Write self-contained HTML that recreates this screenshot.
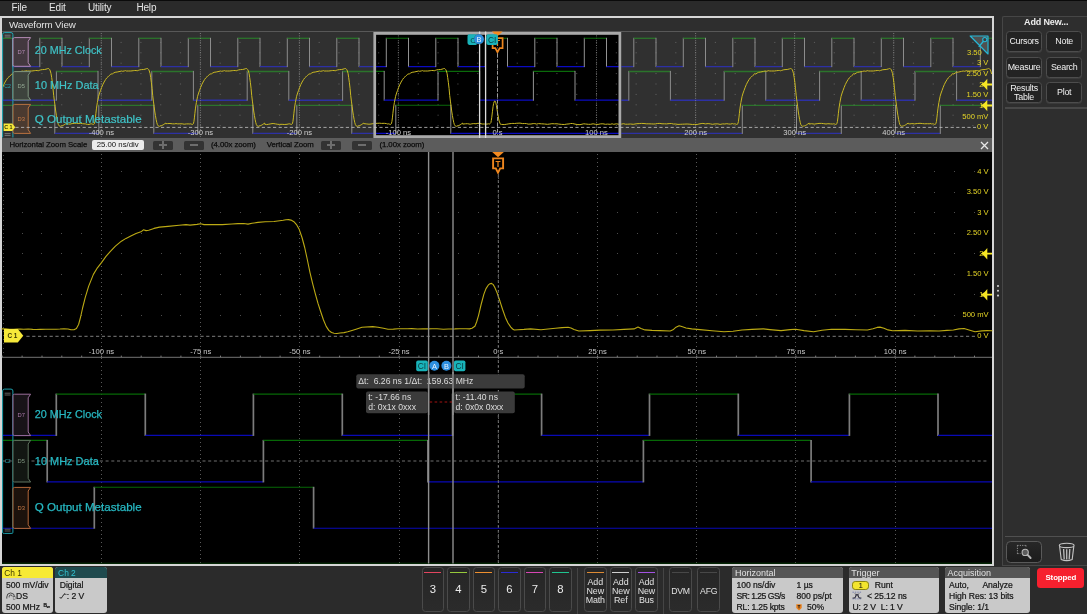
<!DOCTYPE html>
<html lang="en"><head><meta charset="utf-8"><title>Waveform View</title>
<style>
html,body{margin:0;padding:0;background:#2b2b2b;}
body{width:1087px;height:614px;position:relative;overflow:hidden;font-family:"Liberation Sans", "DejaVu Sans", sans-serif;color:#e6e6e6;}
.abs{position:absolute;}
.ly{position:absolute;left:0;top:0;width:1087px;height:614px;will-change:transform;}
svg text{font-family:"Liberation Sans", "DejaVu Sans", sans-serif;}

.menu{left:0;top:1px;width:1087px;height:15px;background:#2a2a2a;}
.menu span{position:absolute;top:1.2px;font-size:10px;color:#e4e4e4;letter-spacing:-0.15px;}
.topline{left:0;top:0;width:1087px;height:1px;background:#0a0a0a;}
.frame{left:0;top:16px;width:994.2px;height:549.6px;border:2px solid #d6d6d6;border-top-width:2px;box-sizing:border-box;background:#000;}
.title{left:2px;top:18px;width:990px;height:13.2px;background:#2e2e2e;border-bottom:1px solid #585858;}
.title span{position:absolute;left:7px;top:1.2px;font-size:9.8px;color:#e4e4e4;letter-spacing:-0.1px;}
.side{left:1002.2px;top:16px;width:86px;height:550px;background:#2e2e2e;border:1px solid #464646;border-right:none;box-sizing:border-box;border-radius:2px 0 0 0;}
.side .hd{position:absolute;left:0;top:-0.2px;width:86px;text-align:center;font-size:9px;font-weight:bold;color:#ededed;letter-spacing:-0.15px;}
.sbtn{position:absolute;width:36px;height:20.7px;box-sizing:border-box;border:1px solid #4d4d4d;border-radius:3.5px;background:#232323;color:#f0f0f0;font-size:8.9px;letter-spacing:-0.25px;text-align:center;line-height:18.6px;box-shadow:0 1px 0 #3a3a3a;white-space:nowrap;}
.sbtn.two{line-height:9px;padding-top:0.6px;}
.sep{position:absolute;left:2px;width:84px;height:1.5px;background:#484848;}
.tbar{left:2px;top:138px;width:990px;height:14px;background:#5c5c5c;}
.tbar span{position:absolute;top:2.2px;font-size:7.8px;color:#0c0c0c;white-space:nowrap;letter-spacing:-0.05px;-webkit-text-stroke:0.25px #0c0c0c;}
.tbar .inp{position:absolute;left:89.8px;top:2.2px;width:51.8px;height:9.6px;background:#ececec;border-radius:2px;color:#111;font-size:7.8px;text-align:center;line-height:9.8px;}
.tbar .zb{position:absolute;top:2.6px;width:20.4px;height:9px;background:#333;border-radius:1.5px;}
.tbar .zb:before{content:"";position:absolute;left:6.4px;top:3.7px;width:7.6px;height:1.6px;background:#6e6e6e;}
.tbar .zb.p:after{content:"";position:absolute;left:9.4px;top:0.9px;width:1.6px;height:7.2px;background:#6e6e6e;}


.bb{position:absolute;top:567.3px;height:45.4px;background:#c9c9c9;border-radius:3px;overflow:hidden;color:#161616;font-size:8.6px;letter-spacing:-0.05px;}
.bb .h{position:absolute;left:0;top:0;right:0;height:10.6px;font-size:9.0px;line-height:12px;padding-left:2.7px;letter-spacing:0px;}
.bb span{position:absolute;white-space:nowrap;line-height:10px;-webkit-text-stroke:0.22px #161616;}
.nb{position:absolute;top:567px;width:22.6px;height:45.4px;box-sizing:border-box;border:1px solid #4a4a4a;border-radius:3.5px;background:linear-gradient(#262626,#2b2b2b);color:#ececec;text-align:center;}
.nb i{position:absolute;left:1.8px;right:1.8px;top:4.0px;height:1.3px;display:block;}
.nb b{position:absolute;left:0;right:0;top:15.2px;font-weight:normal;font-size:11.3px;line-height:12px;}
.nb em{position:absolute;left:-3px;right:-3px;top:9.6px;font-style:normal;font-size:8.9px;line-height:9.0px;color:#e2e2e2;letter-spacing:-0.1px;}
.nb u{position:absolute;left:-3px;right:-3px;top:17.8px;text-decoration:none;font-size:8.7px;line-height:10px;color:#e2e2e2;letter-spacing:-0.2px;}
.vsep{position:absolute;top:568px;width:1px;height:46px;background:#454545;}
.stop{left:1037.4px;top:567.8px;width:47px;height:20.4px;background:#f6202e;border-radius:3.5px;color:#fff;font-weight:bold;font-size:7.9px;line-height:19.6px;text-align:center;letter-spacing:-0.1px;}

</style></head><body>
<div class="ly"><div class="abs topline"></div>
<div class="abs menu"><span style="left:11.5px">File</span><span style="left:49px">Edit</span><span style="left:88px">Utility</span><span style="left:136.4px">Help</span></div>
<div class="abs frame"></div>
<div class="abs title"><span>Waveform View</span></div>
<div class="abs side"><div class="hd">Add New...</div><div class="sbtn" style="left:2.9px;top:14.2px">Cursors</div><div class="sbtn" style="left:43.0px;top:14.2px">Note</div><div class="sbtn" style="left:2.9px;top:39.9px">Measure</div><div class="sbtn" style="left:43.0px;top:39.9px">Search</div><div class="sbtn two" style="left:2.9px;top:65.2px">Results<br>Table</div><div class="sbtn" style="left:43.0px;top:65.2px">Plot</div><div class="sep" style="top:90.4px"></div><div class="sep" style="top:518.8px;height:1px;background:#505050"></div></div></div>
<svg class="abs" style="left:0;top:0" width="1087" height="614" viewBox="0 0 1087 614">
<rect x="2.0" y="32.0" width="990.0" height="106.0" fill="#303030" />
<defs><clipPath id="zb"><rect x="373.3" y="32" width="247.99999999999994" height="106"/></clipPath></defs>
<line x1="2.0" y1="38.3" x2="12.5" y2="38.3" stroke="#2b742b" stroke-width="1.3" />
<line x1="12.5" y1="37.8" x2="12.5" y2="67.1" stroke="#8c8c8c" stroke-width="1.0" />
<line x1="12.5" y1="66.6" x2="39.8" y2="66.6" stroke="#2d30a4" stroke-width="1.3" />
<line x1="39.8" y1="37.8" x2="39.8" y2="67.1" stroke="#8c8c8c" stroke-width="1.0" />
<line x1="39.8" y1="38.3" x2="62.0" y2="38.3" stroke="#2b742b" stroke-width="1.3" />
<line x1="62.0" y1="37.8" x2="62.0" y2="67.1" stroke="#8c8c8c" stroke-width="1.0" />
<line x1="62.0" y1="66.6" x2="89.3" y2="66.6" stroke="#2d30a4" stroke-width="1.3" />
<line x1="89.3" y1="37.8" x2="89.3" y2="67.1" stroke="#8c8c8c" stroke-width="1.0" />
<line x1="89.3" y1="38.3" x2="111.5" y2="38.3" stroke="#2b742b" stroke-width="1.3" />
<line x1="111.5" y1="37.8" x2="111.5" y2="67.1" stroke="#8c8c8c" stroke-width="1.0" />
<line x1="111.5" y1="66.6" x2="138.8" y2="66.6" stroke="#2d30a4" stroke-width="1.3" />
<line x1="138.8" y1="37.8" x2="138.8" y2="67.1" stroke="#8c8c8c" stroke-width="1.0" />
<line x1="138.8" y1="38.3" x2="161.0" y2="38.3" stroke="#2b742b" stroke-width="1.3" />
<line x1="161.0" y1="37.8" x2="161.0" y2="67.1" stroke="#8c8c8c" stroke-width="1.0" />
<line x1="161.0" y1="66.6" x2="188.3" y2="66.6" stroke="#2d30a4" stroke-width="1.3" />
<line x1="188.3" y1="37.8" x2="188.3" y2="67.1" stroke="#8c8c8c" stroke-width="1.0" />
<line x1="188.3" y1="38.3" x2="210.5" y2="38.3" stroke="#2b742b" stroke-width="1.3" />
<line x1="210.5" y1="37.8" x2="210.5" y2="67.1" stroke="#8c8c8c" stroke-width="1.0" />
<line x1="210.5" y1="66.6" x2="237.8" y2="66.6" stroke="#2d30a4" stroke-width="1.3" />
<line x1="237.8" y1="37.8" x2="237.8" y2="67.1" stroke="#8c8c8c" stroke-width="1.0" />
<line x1="237.8" y1="38.3" x2="260.0" y2="38.3" stroke="#2b742b" stroke-width="1.3" />
<line x1="260.0" y1="37.8" x2="260.0" y2="67.1" stroke="#8c8c8c" stroke-width="1.0" />
<line x1="260.0" y1="66.6" x2="287.3" y2="66.6" stroke="#2d30a4" stroke-width="1.3" />
<line x1="287.3" y1="37.8" x2="287.3" y2="67.1" stroke="#8c8c8c" stroke-width="1.0" />
<line x1="287.3" y1="38.3" x2="309.5" y2="38.3" stroke="#2b742b" stroke-width="1.3" />
<line x1="309.5" y1="37.8" x2="309.5" y2="67.1" stroke="#8c8c8c" stroke-width="1.0" />
<line x1="309.5" y1="66.6" x2="336.8" y2="66.6" stroke="#2d30a4" stroke-width="1.3" />
<line x1="336.8" y1="37.8" x2="336.8" y2="67.1" stroke="#8c8c8c" stroke-width="1.0" />
<line x1="336.8" y1="38.3" x2="359.0" y2="38.3" stroke="#2b742b" stroke-width="1.3" />
<line x1="359.0" y1="37.8" x2="359.0" y2="67.1" stroke="#8c8c8c" stroke-width="1.0" />
<line x1="359.0" y1="66.6" x2="386.3" y2="66.6" stroke="#2d30a4" stroke-width="1.3" />
<line x1="386.3" y1="37.8" x2="386.3" y2="67.1" stroke="#8c8c8c" stroke-width="1.0" />
<line x1="386.3" y1="38.3" x2="408.5" y2="38.3" stroke="#2b742b" stroke-width="1.3" />
<line x1="408.5" y1="37.8" x2="408.5" y2="67.1" stroke="#8c8c8c" stroke-width="1.0" />
<line x1="408.5" y1="66.6" x2="435.8" y2="66.6" stroke="#2d30a4" stroke-width="1.3" />
<line x1="435.8" y1="37.8" x2="435.8" y2="67.1" stroke="#8c8c8c" stroke-width="1.0" />
<line x1="435.8" y1="38.3" x2="458.0" y2="38.3" stroke="#2b742b" stroke-width="1.3" />
<line x1="458.0" y1="37.8" x2="458.0" y2="67.1" stroke="#8c8c8c" stroke-width="1.0" />
<line x1="458.0" y1="66.6" x2="485.3" y2="66.6" stroke="#2d30a4" stroke-width="1.3" />
<line x1="485.3" y1="37.8" x2="485.3" y2="67.1" stroke="#8c8c8c" stroke-width="1.0" />
<line x1="485.3" y1="38.3" x2="507.5" y2="38.3" stroke="#2b742b" stroke-width="1.3" />
<line x1="507.5" y1="37.8" x2="507.5" y2="67.1" stroke="#8c8c8c" stroke-width="1.0" />
<line x1="507.5" y1="66.6" x2="534.8" y2="66.6" stroke="#2d30a4" stroke-width="1.3" />
<line x1="534.8" y1="37.8" x2="534.8" y2="67.1" stroke="#8c8c8c" stroke-width="1.0" />
<line x1="534.8" y1="38.3" x2="557.0" y2="38.3" stroke="#2b742b" stroke-width="1.3" />
<line x1="557.0" y1="37.8" x2="557.0" y2="67.1" stroke="#8c8c8c" stroke-width="1.0" />
<line x1="557.0" y1="66.6" x2="584.3" y2="66.6" stroke="#2d30a4" stroke-width="1.3" />
<line x1="584.3" y1="37.8" x2="584.3" y2="67.1" stroke="#8c8c8c" stroke-width="1.0" />
<line x1="584.3" y1="38.3" x2="606.5" y2="38.3" stroke="#2b742b" stroke-width="1.3" />
<line x1="606.5" y1="37.8" x2="606.5" y2="67.1" stroke="#8c8c8c" stroke-width="1.0" />
<line x1="606.5" y1="66.6" x2="633.8" y2="66.6" stroke="#2d30a4" stroke-width="1.3" />
<line x1="633.8" y1="37.8" x2="633.8" y2="67.1" stroke="#8c8c8c" stroke-width="1.0" />
<line x1="633.8" y1="38.3" x2="656.0" y2="38.3" stroke="#2b742b" stroke-width="1.3" />
<line x1="656.0" y1="37.8" x2="656.0" y2="67.1" stroke="#8c8c8c" stroke-width="1.0" />
<line x1="656.0" y1="66.6" x2="683.3" y2="66.6" stroke="#2d30a4" stroke-width="1.3" />
<line x1="683.3" y1="37.8" x2="683.3" y2="67.1" stroke="#8c8c8c" stroke-width="1.0" />
<line x1="683.3" y1="38.3" x2="705.5" y2="38.3" stroke="#2b742b" stroke-width="1.3" />
<line x1="705.5" y1="37.8" x2="705.5" y2="67.1" stroke="#8c8c8c" stroke-width="1.0" />
<line x1="705.5" y1="66.6" x2="732.8" y2="66.6" stroke="#2d30a4" stroke-width="1.3" />
<line x1="732.8" y1="37.8" x2="732.8" y2="67.1" stroke="#8c8c8c" stroke-width="1.0" />
<line x1="732.8" y1="38.3" x2="755.0" y2="38.3" stroke="#2b742b" stroke-width="1.3" />
<line x1="755.0" y1="37.8" x2="755.0" y2="67.1" stroke="#8c8c8c" stroke-width="1.0" />
<line x1="755.0" y1="66.6" x2="782.3" y2="66.6" stroke="#2d30a4" stroke-width="1.3" />
<line x1="782.3" y1="37.8" x2="782.3" y2="67.1" stroke="#8c8c8c" stroke-width="1.0" />
<line x1="782.3" y1="38.3" x2="804.5" y2="38.3" stroke="#2b742b" stroke-width="1.3" />
<line x1="804.5" y1="37.8" x2="804.5" y2="67.1" stroke="#8c8c8c" stroke-width="1.0" />
<line x1="804.5" y1="66.6" x2="831.8" y2="66.6" stroke="#2d30a4" stroke-width="1.3" />
<line x1="831.8" y1="37.8" x2="831.8" y2="67.1" stroke="#8c8c8c" stroke-width="1.0" />
<line x1="831.8" y1="38.3" x2="854.0" y2="38.3" stroke="#2b742b" stroke-width="1.3" />
<line x1="854.0" y1="37.8" x2="854.0" y2="67.1" stroke="#8c8c8c" stroke-width="1.0" />
<line x1="854.0" y1="66.6" x2="881.3" y2="66.6" stroke="#2d30a4" stroke-width="1.3" />
<line x1="881.3" y1="37.8" x2="881.3" y2="67.1" stroke="#8c8c8c" stroke-width="1.0" />
<line x1="881.3" y1="38.3" x2="903.5" y2="38.3" stroke="#2b742b" stroke-width="1.3" />
<line x1="903.5" y1="37.8" x2="903.5" y2="67.1" stroke="#8c8c8c" stroke-width="1.0" />
<line x1="903.5" y1="66.6" x2="930.8" y2="66.6" stroke="#2d30a4" stroke-width="1.3" />
<line x1="930.8" y1="37.8" x2="930.8" y2="67.1" stroke="#8c8c8c" stroke-width="1.0" />
<line x1="930.8" y1="38.3" x2="953.0" y2="38.3" stroke="#2b742b" stroke-width="1.3" />
<line x1="953.0" y1="37.8" x2="953.0" y2="67.1" stroke="#8c8c8c" stroke-width="1.0" />
<line x1="953.0" y1="66.6" x2="980.3" y2="66.6" stroke="#2d30a4" stroke-width="1.3" />
<line x1="980.3" y1="37.8" x2="980.3" y2="67.1" stroke="#8c8c8c" stroke-width="1.0" />
<line x1="980.3" y1="38.3" x2="992.0" y2="38.3" stroke="#2b742b" stroke-width="1.3" />
<line x1="2.0" y1="100.2" x2="2.6" y2="100.2" stroke="#2d30a4" stroke-width="1.5" />
<line x1="2.6" y1="70.9" x2="2.6" y2="100.7" stroke="#8c8c8c" stroke-width="1.0" />
<line x1="2.6" y1="100.2" x2="56.4" y2="100.2" stroke="#2d30a4" stroke-width="1.5" />
<line x1="56.4" y1="70.9" x2="56.4" y2="100.7" stroke="#8c8c8c" stroke-width="1.0" />
<line x1="56.4" y1="71.4" x2="98.0" y2="71.4" stroke="#2b742b" stroke-width="1.5" />
<line x1="98.0" y1="70.9" x2="98.0" y2="100.7" stroke="#8c8c8c" stroke-width="1.0" />
<line x1="98.0" y1="100.2" x2="151.8" y2="100.2" stroke="#2d30a4" stroke-width="1.5" />
<line x1="151.8" y1="70.9" x2="151.8" y2="100.7" stroke="#8c8c8c" stroke-width="1.0" />
<line x1="151.8" y1="71.4" x2="193.4" y2="71.4" stroke="#2b742b" stroke-width="1.5" />
<line x1="193.4" y1="70.9" x2="193.4" y2="100.7" stroke="#8c8c8c" stroke-width="1.0" />
<line x1="193.4" y1="100.2" x2="247.2" y2="100.2" stroke="#2d30a4" stroke-width="1.5" />
<line x1="247.2" y1="70.9" x2="247.2" y2="100.7" stroke="#8c8c8c" stroke-width="1.0" />
<line x1="247.2" y1="71.4" x2="288.8" y2="71.4" stroke="#2b742b" stroke-width="1.5" />
<line x1="288.8" y1="70.9" x2="288.8" y2="100.7" stroke="#8c8c8c" stroke-width="1.0" />
<line x1="288.8" y1="100.2" x2="342.6" y2="100.2" stroke="#2d30a4" stroke-width="1.5" />
<line x1="342.6" y1="70.9" x2="342.6" y2="100.7" stroke="#8c8c8c" stroke-width="1.0" />
<line x1="342.6" y1="71.4" x2="384.2" y2="71.4" stroke="#2b742b" stroke-width="1.5" />
<line x1="384.2" y1="70.9" x2="384.2" y2="100.7" stroke="#8c8c8c" stroke-width="1.0" />
<line x1="384.2" y1="100.2" x2="438.0" y2="100.2" stroke="#2d30a4" stroke-width="1.5" />
<line x1="438.0" y1="70.9" x2="438.0" y2="100.7" stroke="#8c8c8c" stroke-width="1.0" />
<line x1="438.0" y1="71.4" x2="479.6" y2="71.4" stroke="#2b742b" stroke-width="1.5" />
<line x1="479.6" y1="70.9" x2="479.6" y2="100.7" stroke="#8c8c8c" stroke-width="1.0" />
<line x1="479.6" y1="100.2" x2="533.4" y2="100.2" stroke="#2d30a4" stroke-width="1.5" />
<line x1="533.4" y1="70.9" x2="533.4" y2="100.7" stroke="#8c8c8c" stroke-width="1.0" />
<line x1="533.4" y1="71.4" x2="575.0" y2="71.4" stroke="#2b742b" stroke-width="1.5" />
<line x1="575.0" y1="70.9" x2="575.0" y2="100.7" stroke="#8c8c8c" stroke-width="1.0" />
<line x1="575.0" y1="100.2" x2="628.8" y2="100.2" stroke="#2d30a4" stroke-width="1.5" />
<line x1="628.8" y1="70.9" x2="628.8" y2="100.7" stroke="#8c8c8c" stroke-width="1.0" />
<line x1="628.8" y1="71.4" x2="670.4" y2="71.4" stroke="#2b742b" stroke-width="1.5" />
<line x1="670.4" y1="70.9" x2="670.4" y2="100.7" stroke="#8c8c8c" stroke-width="1.0" />
<line x1="670.4" y1="100.2" x2="724.2" y2="100.2" stroke="#2d30a4" stroke-width="1.5" />
<line x1="724.2" y1="70.9" x2="724.2" y2="100.7" stroke="#8c8c8c" stroke-width="1.0" />
<line x1="724.2" y1="71.4" x2="765.8" y2="71.4" stroke="#2b742b" stroke-width="1.5" />
<line x1="765.8" y1="70.9" x2="765.8" y2="100.7" stroke="#8c8c8c" stroke-width="1.0" />
<line x1="765.8" y1="100.2" x2="819.6" y2="100.2" stroke="#2d30a4" stroke-width="1.5" />
<line x1="819.6" y1="70.9" x2="819.6" y2="100.7" stroke="#8c8c8c" stroke-width="1.0" />
<line x1="819.6" y1="71.4" x2="861.2" y2="71.4" stroke="#2b742b" stroke-width="1.5" />
<line x1="861.2" y1="70.9" x2="861.2" y2="100.7" stroke="#8c8c8c" stroke-width="1.0" />
<line x1="861.2" y1="100.2" x2="915.0" y2="100.2" stroke="#2d30a4" stroke-width="1.5" />
<line x1="915.0" y1="70.9" x2="915.0" y2="100.7" stroke="#8c8c8c" stroke-width="1.0" />
<line x1="915.0" y1="71.4" x2="956.6" y2="71.4" stroke="#2b742b" stroke-width="1.5" />
<line x1="956.6" y1="70.9" x2="956.6" y2="100.7" stroke="#8c8c8c" stroke-width="1.0" />
<line x1="956.6" y1="100.2" x2="992.0" y2="100.2" stroke="#2d30a4" stroke-width="1.5" />
<line x1="2.0" y1="105.3" x2="54.8" y2="105.3" stroke="#2b742b" stroke-width="1.3" />
<line x1="54.8" y1="104.8" x2="54.8" y2="133.9" stroke="#8c8c8c" stroke-width="1.0" />
<line x1="54.8" y1="133.4" x2="98.8" y2="133.4" stroke="#2d30a4" stroke-width="1.3" />
<line x1="98.8" y1="104.8" x2="98.8" y2="133.9" stroke="#8c8c8c" stroke-width="1.0" />
<line x1="98.8" y1="105.3" x2="153.8" y2="105.3" stroke="#2b742b" stroke-width="1.3" />
<line x1="153.8" y1="104.8" x2="153.8" y2="133.9" stroke="#8c8c8c" stroke-width="1.0" />
<line x1="153.8" y1="133.4" x2="197.8" y2="133.4" stroke="#2d30a4" stroke-width="1.3" />
<line x1="197.8" y1="104.8" x2="197.8" y2="133.9" stroke="#8c8c8c" stroke-width="1.0" />
<line x1="197.8" y1="105.3" x2="252.8" y2="105.3" stroke="#2b742b" stroke-width="1.3" />
<line x1="252.8" y1="104.8" x2="252.8" y2="133.9" stroke="#8c8c8c" stroke-width="1.0" />
<line x1="252.8" y1="133.4" x2="296.8" y2="133.4" stroke="#2d30a4" stroke-width="1.3" />
<line x1="296.8" y1="104.8" x2="296.8" y2="133.9" stroke="#8c8c8c" stroke-width="1.0" />
<line x1="296.8" y1="105.3" x2="351.8" y2="105.3" stroke="#2b742b" stroke-width="1.3" />
<line x1="351.8" y1="104.8" x2="351.8" y2="133.9" stroke="#8c8c8c" stroke-width="1.0" />
<line x1="351.8" y1="133.4" x2="395.8" y2="133.4" stroke="#2d30a4" stroke-width="1.3" />
<line x1="395.8" y1="104.8" x2="395.8" y2="133.9" stroke="#8c8c8c" stroke-width="1.0" />
<line x1="395.8" y1="105.3" x2="450.8" y2="105.3" stroke="#2b742b" stroke-width="1.3" />
<line x1="450.8" y1="104.8" x2="450.8" y2="133.9" stroke="#8c8c8c" stroke-width="1.0" />
<line x1="450.8" y1="133.4" x2="742.3" y2="133.4" stroke="#2d30a4" stroke-width="1.3" />
<line x1="742.3" y1="104.8" x2="742.3" y2="133.9" stroke="#8c8c8c" stroke-width="1.0" />
<line x1="742.3" y1="105.3" x2="796.5" y2="105.3" stroke="#2b742b" stroke-width="1.3" />
<line x1="796.5" y1="104.8" x2="796.5" y2="133.9" stroke="#8c8c8c" stroke-width="1.0" />
<line x1="796.5" y1="133.4" x2="841.3" y2="133.4" stroke="#2d30a4" stroke-width="1.3" />
<line x1="841.3" y1="104.8" x2="841.3" y2="133.9" stroke="#8c8c8c" stroke-width="1.0" />
<line x1="841.3" y1="105.3" x2="895.5" y2="105.3" stroke="#2b742b" stroke-width="1.3" />
<line x1="895.5" y1="104.8" x2="895.5" y2="133.9" stroke="#8c8c8c" stroke-width="1.0" />
<line x1="895.5" y1="133.4" x2="940.3" y2="133.4" stroke="#2d30a4" stroke-width="1.3" />
<line x1="940.3" y1="104.8" x2="940.3" y2="133.9" stroke="#8c8c8c" stroke-width="1.0" />
<line x1="940.3" y1="105.3" x2="992.0" y2="105.3" stroke="#2b742b" stroke-width="1.3" />
<rect x="373.3" y="32.0" width="248.0" height="106.0" fill="#000" />
<path d="M21.5 42.4h1.2M41.3 42.4h1.2M61.1 42.4h1.2M80.9 42.4h1.2M100.7 42.4h1.2M120.5 42.4h1.2M140.3 42.4h1.2M160.1 42.4h1.2M179.9 42.4h1.2M199.8 42.4h1.2M219.6 42.4h1.2M239.4 42.4h1.2M259.2 42.4h1.2M279.0 42.4h1.2M298.8 42.4h1.2M318.6 42.4h1.2M338.4 42.4h1.2M358.2 42.4h1.2M378.0 42.4h1.2M397.8 42.4h1.2M417.7 42.4h1.2M437.5 42.4h1.2M457.3 42.4h1.2M477.1 42.4h1.2M496.9 42.4h1.2M516.7 42.4h1.2M536.5 42.4h1.2M556.3 42.4h1.2M576.1 42.4h1.2M595.9 42.4h1.2M615.8 42.4h1.2M635.6 42.4h1.2M655.4 42.4h1.2M675.2 42.4h1.2M695.0 42.4h1.2M714.8 42.4h1.2M734.6 42.4h1.2M754.4 42.4h1.2M774.2 42.4h1.2M794.0 42.4h1.2M813.9 42.4h1.2M833.7 42.4h1.2M853.5 42.4h1.2M873.3 42.4h1.2M893.1 42.4h1.2M912.9 42.4h1.2M932.7 42.4h1.2M952.5 42.4h1.2M972.3 42.4h1.2M21.5 52.8h1.2M41.3 52.8h1.2M61.1 52.8h1.2M80.9 52.8h1.2M100.7 52.8h1.2M120.5 52.8h1.2M140.3 52.8h1.2M160.1 52.8h1.2M179.9 52.8h1.2M199.8 52.8h1.2M219.6 52.8h1.2M239.4 52.8h1.2M259.2 52.8h1.2M279.0 52.8h1.2M298.8 52.8h1.2M318.6 52.8h1.2M338.4 52.8h1.2M358.2 52.8h1.2M378.0 52.8h1.2M397.8 52.8h1.2M417.7 52.8h1.2M437.5 52.8h1.2M457.3 52.8h1.2M477.1 52.8h1.2M496.9 52.8h1.2M516.7 52.8h1.2M536.5 52.8h1.2M556.3 52.8h1.2M576.1 52.8h1.2M595.9 52.8h1.2M615.8 52.8h1.2M635.6 52.8h1.2M655.4 52.8h1.2M675.2 52.8h1.2M695.0 52.8h1.2M714.8 52.8h1.2M734.6 52.8h1.2M754.4 52.8h1.2M774.2 52.8h1.2M794.0 52.8h1.2M813.9 52.8h1.2M833.7 52.8h1.2M853.5 52.8h1.2M873.3 52.8h1.2M893.1 52.8h1.2M912.9 52.8h1.2M932.7 52.8h1.2M952.5 52.8h1.2M972.3 52.8h1.2M21.5 63.2h1.2M41.3 63.2h1.2M61.1 63.2h1.2M80.9 63.2h1.2M100.7 63.2h1.2M120.5 63.2h1.2M140.3 63.2h1.2M160.1 63.2h1.2M179.9 63.2h1.2M199.8 63.2h1.2M219.6 63.2h1.2M239.4 63.2h1.2M259.2 63.2h1.2M279.0 63.2h1.2M298.8 63.2h1.2M318.6 63.2h1.2M338.4 63.2h1.2M358.2 63.2h1.2M378.0 63.2h1.2M397.8 63.2h1.2M417.7 63.2h1.2M437.5 63.2h1.2M457.3 63.2h1.2M477.1 63.2h1.2M496.9 63.2h1.2M516.7 63.2h1.2M536.5 63.2h1.2M556.3 63.2h1.2M576.1 63.2h1.2M595.9 63.2h1.2M615.8 63.2h1.2M635.6 63.2h1.2M655.4 63.2h1.2M675.2 63.2h1.2M695.0 63.2h1.2M714.8 63.2h1.2M734.6 63.2h1.2M754.4 63.2h1.2M774.2 63.2h1.2M794.0 63.2h1.2M813.9 63.2h1.2M833.7 63.2h1.2M853.5 63.2h1.2M873.3 63.2h1.2M893.1 63.2h1.2M912.9 63.2h1.2M932.7 63.2h1.2M952.5 63.2h1.2M972.3 63.2h1.2M21.5 73.6h1.2M41.3 73.6h1.2M61.1 73.6h1.2M80.9 73.6h1.2M100.7 73.6h1.2M120.5 73.6h1.2M140.3 73.6h1.2M160.1 73.6h1.2M179.9 73.6h1.2M199.8 73.6h1.2M219.6 73.6h1.2M239.4 73.6h1.2M259.2 73.6h1.2M279.0 73.6h1.2M298.8 73.6h1.2M318.6 73.6h1.2M338.4 73.6h1.2M358.2 73.6h1.2M378.0 73.6h1.2M397.8 73.6h1.2M417.7 73.6h1.2M437.5 73.6h1.2M457.3 73.6h1.2M477.1 73.6h1.2M496.9 73.6h1.2M516.7 73.6h1.2M536.5 73.6h1.2M556.3 73.6h1.2M576.1 73.6h1.2M595.9 73.6h1.2M615.8 73.6h1.2M635.6 73.6h1.2M655.4 73.6h1.2M675.2 73.6h1.2M695.0 73.6h1.2M714.8 73.6h1.2M734.6 73.6h1.2M754.4 73.6h1.2M774.2 73.6h1.2M794.0 73.6h1.2M813.9 73.6h1.2M833.7 73.6h1.2M853.5 73.6h1.2M873.3 73.6h1.2M893.1 73.6h1.2M912.9 73.6h1.2M932.7 73.6h1.2M952.5 73.6h1.2M972.3 73.6h1.2M21.5 84.0h1.2M41.3 84.0h1.2M61.1 84.0h1.2M80.9 84.0h1.2M100.7 84.0h1.2M120.5 84.0h1.2M140.3 84.0h1.2M160.1 84.0h1.2M179.9 84.0h1.2M199.8 84.0h1.2M219.6 84.0h1.2M239.4 84.0h1.2M259.2 84.0h1.2M279.0 84.0h1.2M298.8 84.0h1.2M318.6 84.0h1.2M338.4 84.0h1.2M358.2 84.0h1.2M378.0 84.0h1.2M397.8 84.0h1.2M417.7 84.0h1.2M437.5 84.0h1.2M457.3 84.0h1.2M477.1 84.0h1.2M496.9 84.0h1.2M516.7 84.0h1.2M536.5 84.0h1.2M556.3 84.0h1.2M576.1 84.0h1.2M595.9 84.0h1.2M615.8 84.0h1.2M635.6 84.0h1.2M655.4 84.0h1.2M675.2 84.0h1.2M695.0 84.0h1.2M714.8 84.0h1.2M734.6 84.0h1.2M754.4 84.0h1.2M774.2 84.0h1.2M794.0 84.0h1.2M813.9 84.0h1.2M833.7 84.0h1.2M853.5 84.0h1.2M873.3 84.0h1.2M893.1 84.0h1.2M912.9 84.0h1.2M932.7 84.0h1.2M952.5 84.0h1.2M972.3 84.0h1.2M21.5 94.4h1.2M41.3 94.4h1.2M61.1 94.4h1.2M80.9 94.4h1.2M100.7 94.4h1.2M120.5 94.4h1.2M140.3 94.4h1.2M160.1 94.4h1.2M179.9 94.4h1.2M199.8 94.4h1.2M219.6 94.4h1.2M239.4 94.4h1.2M259.2 94.4h1.2M279.0 94.4h1.2M298.8 94.4h1.2M318.6 94.4h1.2M338.4 94.4h1.2M358.2 94.4h1.2M378.0 94.4h1.2M397.8 94.4h1.2M417.7 94.4h1.2M437.5 94.4h1.2M457.3 94.4h1.2M477.1 94.4h1.2M496.9 94.4h1.2M516.7 94.4h1.2M536.5 94.4h1.2M556.3 94.4h1.2M576.1 94.4h1.2M595.9 94.4h1.2M615.8 94.4h1.2M635.6 94.4h1.2M655.4 94.4h1.2M675.2 94.4h1.2M695.0 94.4h1.2M714.8 94.4h1.2M734.6 94.4h1.2M754.4 94.4h1.2M774.2 94.4h1.2M794.0 94.4h1.2M813.9 94.4h1.2M833.7 94.4h1.2M853.5 94.4h1.2M873.3 94.4h1.2M893.1 94.4h1.2M912.9 94.4h1.2M932.7 94.4h1.2M952.5 94.4h1.2M972.3 94.4h1.2M21.5 104.8h1.2M41.3 104.8h1.2M61.1 104.8h1.2M80.9 104.8h1.2M100.7 104.8h1.2M120.5 104.8h1.2M140.3 104.8h1.2M160.1 104.8h1.2M179.9 104.8h1.2M199.8 104.8h1.2M219.6 104.8h1.2M239.4 104.8h1.2M259.2 104.8h1.2M279.0 104.8h1.2M298.8 104.8h1.2M318.6 104.8h1.2M338.4 104.8h1.2M358.2 104.8h1.2M378.0 104.8h1.2M397.8 104.8h1.2M417.7 104.8h1.2M437.5 104.8h1.2M457.3 104.8h1.2M477.1 104.8h1.2M496.9 104.8h1.2M516.7 104.8h1.2M536.5 104.8h1.2M556.3 104.8h1.2M576.1 104.8h1.2M595.9 104.8h1.2M615.8 104.8h1.2M635.6 104.8h1.2M655.4 104.8h1.2M675.2 104.8h1.2M695.0 104.8h1.2M714.8 104.8h1.2M734.6 104.8h1.2M754.4 104.8h1.2M774.2 104.8h1.2M794.0 104.8h1.2M813.9 104.8h1.2M833.7 104.8h1.2M853.5 104.8h1.2M873.3 104.8h1.2M893.1 104.8h1.2M912.9 104.8h1.2M932.7 104.8h1.2M952.5 104.8h1.2M972.3 104.8h1.2M21.5 115.2h1.2M41.3 115.2h1.2M61.1 115.2h1.2M80.9 115.2h1.2M100.7 115.2h1.2M120.5 115.2h1.2M140.3 115.2h1.2M160.1 115.2h1.2M179.9 115.2h1.2M199.8 115.2h1.2M219.6 115.2h1.2M239.4 115.2h1.2M259.2 115.2h1.2M279.0 115.2h1.2M298.8 115.2h1.2M318.6 115.2h1.2M338.4 115.2h1.2M358.2 115.2h1.2M378.0 115.2h1.2M397.8 115.2h1.2M417.7 115.2h1.2M437.5 115.2h1.2M457.3 115.2h1.2M477.1 115.2h1.2M496.9 115.2h1.2M516.7 115.2h1.2M536.5 115.2h1.2M556.3 115.2h1.2M576.1 115.2h1.2M595.9 115.2h1.2M615.8 115.2h1.2M635.6 115.2h1.2M655.4 115.2h1.2M675.2 115.2h1.2M695.0 115.2h1.2M714.8 115.2h1.2M734.6 115.2h1.2M754.4 115.2h1.2M774.2 115.2h1.2M794.0 115.2h1.2M813.9 115.2h1.2M833.7 115.2h1.2M853.5 115.2h1.2M873.3 115.2h1.2M893.1 115.2h1.2M912.9 115.2h1.2M932.7 115.2h1.2M952.5 115.2h1.2M972.3 115.2h1.2M21.5 125.6h1.2M41.3 125.6h1.2M61.1 125.6h1.2M80.9 125.6h1.2M100.7 125.6h1.2M120.5 125.6h1.2M140.3 125.6h1.2M160.1 125.6h1.2M179.9 125.6h1.2M199.8 125.6h1.2M219.6 125.6h1.2M239.4 125.6h1.2M259.2 125.6h1.2M279.0 125.6h1.2M298.8 125.6h1.2M318.6 125.6h1.2M338.4 125.6h1.2M358.2 125.6h1.2M378.0 125.6h1.2M397.8 125.6h1.2M417.7 125.6h1.2M437.5 125.6h1.2M457.3 125.6h1.2M477.1 125.6h1.2M496.9 125.6h1.2M516.7 125.6h1.2M536.5 125.6h1.2M556.3 125.6h1.2M576.1 125.6h1.2M595.9 125.6h1.2M615.8 125.6h1.2M635.6 125.6h1.2M655.4 125.6h1.2M675.2 125.6h1.2M695.0 125.6h1.2M714.8 125.6h1.2M734.6 125.6h1.2M754.4 125.6h1.2M774.2 125.6h1.2M794.0 125.6h1.2M813.9 125.6h1.2M833.7 125.6h1.2M853.5 125.6h1.2M873.3 125.6h1.2M893.1 125.6h1.2M912.9 125.6h1.2M932.7 125.6h1.2M952.5 125.6h1.2M972.3 125.6h1.2" stroke="#8a8a8a" stroke-width="1" fill="none" opacity="0.5"/>
<line x1="101.3" y1="33.0" x2="101.3" y2="137.0" stroke="#9a9a9a" stroke-width="1" stroke-dasharray="1 1.4" opacity="0.7"/>
<line x1="200.4" y1="33.0" x2="200.4" y2="137.0" stroke="#9a9a9a" stroke-width="1" stroke-dasharray="1 1.4" opacity="0.7"/>
<line x1="299.4" y1="33.0" x2="299.4" y2="137.0" stroke="#9a9a9a" stroke-width="1" stroke-dasharray="1 1.4" opacity="0.7"/>
<line x1="398.4" y1="33.0" x2="398.4" y2="137.0" stroke="#9a9a9a" stroke-width="1" stroke-dasharray="1 1.4" opacity="0.7"/>
<line x1="497.5" y1="33.0" x2="497.5" y2="137.0" stroke="#9a9a9a" stroke-width="1" stroke-dasharray="1 1.4" opacity="0.7"/>
<line x1="596.5" y1="33.0" x2="596.5" y2="137.0" stroke="#9a9a9a" stroke-width="1" stroke-dasharray="1 1.4" opacity="0.7"/>
<line x1="695.6" y1="33.0" x2="695.6" y2="137.0" stroke="#9a9a9a" stroke-width="1" stroke-dasharray="1 1.4" opacity="0.7"/>
<line x1="794.6" y1="33.0" x2="794.6" y2="137.0" stroke="#9a9a9a" stroke-width="1" stroke-dasharray="1 1.4" opacity="0.7"/>
<line x1="893.7" y1="33.0" x2="893.7" y2="137.0" stroke="#9a9a9a" stroke-width="1" stroke-dasharray="1 1.4" opacity="0.7"/>
<g clip-path="url(#zb)">
<line x1="2.0" y1="38.3" x2="12.5" y2="38.3" stroke="#0a6a0a" stroke-width="1.1" />
<line x1="12.5" y1="37.8" x2="12.5" y2="67.1" stroke="#a4a4a4" stroke-width="0.9" />
<line x1="12.5" y1="66.6" x2="39.8" y2="66.6" stroke="#0b0bc2" stroke-width="1.1" />
<line x1="39.8" y1="37.8" x2="39.8" y2="67.1" stroke="#a4a4a4" stroke-width="0.9" />
<line x1="39.8" y1="38.3" x2="62.0" y2="38.3" stroke="#0a6a0a" stroke-width="1.1" />
<line x1="62.0" y1="37.8" x2="62.0" y2="67.1" stroke="#a4a4a4" stroke-width="0.9" />
<line x1="62.0" y1="66.6" x2="89.3" y2="66.6" stroke="#0b0bc2" stroke-width="1.1" />
<line x1="89.3" y1="37.8" x2="89.3" y2="67.1" stroke="#a4a4a4" stroke-width="0.9" />
<line x1="89.3" y1="38.3" x2="111.5" y2="38.3" stroke="#0a6a0a" stroke-width="1.1" />
<line x1="111.5" y1="37.8" x2="111.5" y2="67.1" stroke="#a4a4a4" stroke-width="0.9" />
<line x1="111.5" y1="66.6" x2="138.8" y2="66.6" stroke="#0b0bc2" stroke-width="1.1" />
<line x1="138.8" y1="37.8" x2="138.8" y2="67.1" stroke="#a4a4a4" stroke-width="0.9" />
<line x1="138.8" y1="38.3" x2="161.0" y2="38.3" stroke="#0a6a0a" stroke-width="1.1" />
<line x1="161.0" y1="37.8" x2="161.0" y2="67.1" stroke="#a4a4a4" stroke-width="0.9" />
<line x1="161.0" y1="66.6" x2="188.3" y2="66.6" stroke="#0b0bc2" stroke-width="1.1" />
<line x1="188.3" y1="37.8" x2="188.3" y2="67.1" stroke="#a4a4a4" stroke-width="0.9" />
<line x1="188.3" y1="38.3" x2="210.5" y2="38.3" stroke="#0a6a0a" stroke-width="1.1" />
<line x1="210.5" y1="37.8" x2="210.5" y2="67.1" stroke="#a4a4a4" stroke-width="0.9" />
<line x1="210.5" y1="66.6" x2="237.8" y2="66.6" stroke="#0b0bc2" stroke-width="1.1" />
<line x1="237.8" y1="37.8" x2="237.8" y2="67.1" stroke="#a4a4a4" stroke-width="0.9" />
<line x1="237.8" y1="38.3" x2="260.0" y2="38.3" stroke="#0a6a0a" stroke-width="1.1" />
<line x1="260.0" y1="37.8" x2="260.0" y2="67.1" stroke="#a4a4a4" stroke-width="0.9" />
<line x1="260.0" y1="66.6" x2="287.3" y2="66.6" stroke="#0b0bc2" stroke-width="1.1" />
<line x1="287.3" y1="37.8" x2="287.3" y2="67.1" stroke="#a4a4a4" stroke-width="0.9" />
<line x1="287.3" y1="38.3" x2="309.5" y2="38.3" stroke="#0a6a0a" stroke-width="1.1" />
<line x1="309.5" y1="37.8" x2="309.5" y2="67.1" stroke="#a4a4a4" stroke-width="0.9" />
<line x1="309.5" y1="66.6" x2="336.8" y2="66.6" stroke="#0b0bc2" stroke-width="1.1" />
<line x1="336.8" y1="37.8" x2="336.8" y2="67.1" stroke="#a4a4a4" stroke-width="0.9" />
<line x1="336.8" y1="38.3" x2="359.0" y2="38.3" stroke="#0a6a0a" stroke-width="1.1" />
<line x1="359.0" y1="37.8" x2="359.0" y2="67.1" stroke="#a4a4a4" stroke-width="0.9" />
<line x1="359.0" y1="66.6" x2="386.3" y2="66.6" stroke="#0b0bc2" stroke-width="1.1" />
<line x1="386.3" y1="37.8" x2="386.3" y2="67.1" stroke="#a4a4a4" stroke-width="0.9" />
<line x1="386.3" y1="38.3" x2="408.5" y2="38.3" stroke="#0a6a0a" stroke-width="1.1" />
<line x1="408.5" y1="37.8" x2="408.5" y2="67.1" stroke="#a4a4a4" stroke-width="0.9" />
<line x1="408.5" y1="66.6" x2="435.8" y2="66.6" stroke="#0b0bc2" stroke-width="1.1" />
<line x1="435.8" y1="37.8" x2="435.8" y2="67.1" stroke="#a4a4a4" stroke-width="0.9" />
<line x1="435.8" y1="38.3" x2="458.0" y2="38.3" stroke="#0a6a0a" stroke-width="1.1" />
<line x1="458.0" y1="37.8" x2="458.0" y2="67.1" stroke="#a4a4a4" stroke-width="0.9" />
<line x1="458.0" y1="66.6" x2="485.3" y2="66.6" stroke="#0b0bc2" stroke-width="1.1" />
<line x1="485.3" y1="37.8" x2="485.3" y2="67.1" stroke="#a4a4a4" stroke-width="0.9" />
<line x1="485.3" y1="38.3" x2="507.5" y2="38.3" stroke="#0a6a0a" stroke-width="1.1" />
<line x1="507.5" y1="37.8" x2="507.5" y2="67.1" stroke="#a4a4a4" stroke-width="0.9" />
<line x1="507.5" y1="66.6" x2="534.8" y2="66.6" stroke="#0b0bc2" stroke-width="1.1" />
<line x1="534.8" y1="37.8" x2="534.8" y2="67.1" stroke="#a4a4a4" stroke-width="0.9" />
<line x1="534.8" y1="38.3" x2="557.0" y2="38.3" stroke="#0a6a0a" stroke-width="1.1" />
<line x1="557.0" y1="37.8" x2="557.0" y2="67.1" stroke="#a4a4a4" stroke-width="0.9" />
<line x1="557.0" y1="66.6" x2="584.3" y2="66.6" stroke="#0b0bc2" stroke-width="1.1" />
<line x1="584.3" y1="37.8" x2="584.3" y2="67.1" stroke="#a4a4a4" stroke-width="0.9" />
<line x1="584.3" y1="38.3" x2="606.5" y2="38.3" stroke="#0a6a0a" stroke-width="1.1" />
<line x1="606.5" y1="37.8" x2="606.5" y2="67.1" stroke="#a4a4a4" stroke-width="0.9" />
<line x1="606.5" y1="66.6" x2="633.8" y2="66.6" stroke="#0b0bc2" stroke-width="1.1" />
<line x1="633.8" y1="37.8" x2="633.8" y2="67.1" stroke="#a4a4a4" stroke-width="0.9" />
<line x1="633.8" y1="38.3" x2="656.0" y2="38.3" stroke="#0a6a0a" stroke-width="1.1" />
<line x1="656.0" y1="37.8" x2="656.0" y2="67.1" stroke="#a4a4a4" stroke-width="0.9" />
<line x1="656.0" y1="66.6" x2="683.3" y2="66.6" stroke="#0b0bc2" stroke-width="1.1" />
<line x1="683.3" y1="37.8" x2="683.3" y2="67.1" stroke="#a4a4a4" stroke-width="0.9" />
<line x1="683.3" y1="38.3" x2="705.5" y2="38.3" stroke="#0a6a0a" stroke-width="1.1" />
<line x1="705.5" y1="37.8" x2="705.5" y2="67.1" stroke="#a4a4a4" stroke-width="0.9" />
<line x1="705.5" y1="66.6" x2="732.8" y2="66.6" stroke="#0b0bc2" stroke-width="1.1" />
<line x1="732.8" y1="37.8" x2="732.8" y2="67.1" stroke="#a4a4a4" stroke-width="0.9" />
<line x1="732.8" y1="38.3" x2="755.0" y2="38.3" stroke="#0a6a0a" stroke-width="1.1" />
<line x1="755.0" y1="37.8" x2="755.0" y2="67.1" stroke="#a4a4a4" stroke-width="0.9" />
<line x1="755.0" y1="66.6" x2="782.3" y2="66.6" stroke="#0b0bc2" stroke-width="1.1" />
<line x1="782.3" y1="37.8" x2="782.3" y2="67.1" stroke="#a4a4a4" stroke-width="0.9" />
<line x1="782.3" y1="38.3" x2="804.5" y2="38.3" stroke="#0a6a0a" stroke-width="1.1" />
<line x1="804.5" y1="37.8" x2="804.5" y2="67.1" stroke="#a4a4a4" stroke-width="0.9" />
<line x1="804.5" y1="66.6" x2="831.8" y2="66.6" stroke="#0b0bc2" stroke-width="1.1" />
<line x1="831.8" y1="37.8" x2="831.8" y2="67.1" stroke="#a4a4a4" stroke-width="0.9" />
<line x1="831.8" y1="38.3" x2="854.0" y2="38.3" stroke="#0a6a0a" stroke-width="1.1" />
<line x1="854.0" y1="37.8" x2="854.0" y2="67.1" stroke="#a4a4a4" stroke-width="0.9" />
<line x1="854.0" y1="66.6" x2="881.3" y2="66.6" stroke="#0b0bc2" stroke-width="1.1" />
<line x1="881.3" y1="37.8" x2="881.3" y2="67.1" stroke="#a4a4a4" stroke-width="0.9" />
<line x1="881.3" y1="38.3" x2="903.5" y2="38.3" stroke="#0a6a0a" stroke-width="1.1" />
<line x1="903.5" y1="37.8" x2="903.5" y2="67.1" stroke="#a4a4a4" stroke-width="0.9" />
<line x1="903.5" y1="66.6" x2="930.8" y2="66.6" stroke="#0b0bc2" stroke-width="1.1" />
<line x1="930.8" y1="37.8" x2="930.8" y2="67.1" stroke="#a4a4a4" stroke-width="0.9" />
<line x1="930.8" y1="38.3" x2="953.0" y2="38.3" stroke="#0a6a0a" stroke-width="1.1" />
<line x1="953.0" y1="37.8" x2="953.0" y2="67.1" stroke="#a4a4a4" stroke-width="0.9" />
<line x1="953.0" y1="66.6" x2="980.3" y2="66.6" stroke="#0b0bc2" stroke-width="1.1" />
<line x1="980.3" y1="37.8" x2="980.3" y2="67.1" stroke="#a4a4a4" stroke-width="0.9" />
<line x1="980.3" y1="38.3" x2="992.0" y2="38.3" stroke="#0a6a0a" stroke-width="1.1" />
<line x1="2.0" y1="100.2" x2="2.6" y2="100.2" stroke="#0b0bc2" stroke-width="1.2" />
<line x1="2.6" y1="70.9" x2="2.6" y2="100.7" stroke="#a4a4a4" stroke-width="0.9" />
<line x1="2.6" y1="100.2" x2="56.4" y2="100.2" stroke="#0b0bc2" stroke-width="1.2" />
<line x1="56.4" y1="70.9" x2="56.4" y2="100.7" stroke="#a4a4a4" stroke-width="0.9" />
<line x1="56.4" y1="71.4" x2="98.0" y2="71.4" stroke="#0a6a0a" stroke-width="1.2" />
<line x1="98.0" y1="70.9" x2="98.0" y2="100.7" stroke="#a4a4a4" stroke-width="0.9" />
<line x1="98.0" y1="100.2" x2="151.8" y2="100.2" stroke="#0b0bc2" stroke-width="1.2" />
<line x1="151.8" y1="70.9" x2="151.8" y2="100.7" stroke="#a4a4a4" stroke-width="0.9" />
<line x1="151.8" y1="71.4" x2="193.4" y2="71.4" stroke="#0a6a0a" stroke-width="1.2" />
<line x1="193.4" y1="70.9" x2="193.4" y2="100.7" stroke="#a4a4a4" stroke-width="0.9" />
<line x1="193.4" y1="100.2" x2="247.2" y2="100.2" stroke="#0b0bc2" stroke-width="1.2" />
<line x1="247.2" y1="70.9" x2="247.2" y2="100.7" stroke="#a4a4a4" stroke-width="0.9" />
<line x1="247.2" y1="71.4" x2="288.8" y2="71.4" stroke="#0a6a0a" stroke-width="1.2" />
<line x1="288.8" y1="70.9" x2="288.8" y2="100.7" stroke="#a4a4a4" stroke-width="0.9" />
<line x1="288.8" y1="100.2" x2="342.6" y2="100.2" stroke="#0b0bc2" stroke-width="1.2" />
<line x1="342.6" y1="70.9" x2="342.6" y2="100.7" stroke="#a4a4a4" stroke-width="0.9" />
<line x1="342.6" y1="71.4" x2="384.2" y2="71.4" stroke="#0a6a0a" stroke-width="1.2" />
<line x1="384.2" y1="70.9" x2="384.2" y2="100.7" stroke="#a4a4a4" stroke-width="0.9" />
<line x1="384.2" y1="100.2" x2="438.0" y2="100.2" stroke="#0b0bc2" stroke-width="1.2" />
<line x1="438.0" y1="70.9" x2="438.0" y2="100.7" stroke="#a4a4a4" stroke-width="0.9" />
<line x1="438.0" y1="71.4" x2="479.6" y2="71.4" stroke="#0a6a0a" stroke-width="1.2" />
<line x1="479.6" y1="70.9" x2="479.6" y2="100.7" stroke="#a4a4a4" stroke-width="0.9" />
<line x1="479.6" y1="100.2" x2="533.4" y2="100.2" stroke="#0b0bc2" stroke-width="1.2" />
<line x1="533.4" y1="70.9" x2="533.4" y2="100.7" stroke="#a4a4a4" stroke-width="0.9" />
<line x1="533.4" y1="71.4" x2="575.0" y2="71.4" stroke="#0a6a0a" stroke-width="1.2" />
<line x1="575.0" y1="70.9" x2="575.0" y2="100.7" stroke="#a4a4a4" stroke-width="0.9" />
<line x1="575.0" y1="100.2" x2="628.8" y2="100.2" stroke="#0b0bc2" stroke-width="1.2" />
<line x1="628.8" y1="70.9" x2="628.8" y2="100.7" stroke="#a4a4a4" stroke-width="0.9" />
<line x1="628.8" y1="71.4" x2="670.4" y2="71.4" stroke="#0a6a0a" stroke-width="1.2" />
<line x1="670.4" y1="70.9" x2="670.4" y2="100.7" stroke="#a4a4a4" stroke-width="0.9" />
<line x1="670.4" y1="100.2" x2="724.2" y2="100.2" stroke="#0b0bc2" stroke-width="1.2" />
<line x1="724.2" y1="70.9" x2="724.2" y2="100.7" stroke="#a4a4a4" stroke-width="0.9" />
<line x1="724.2" y1="71.4" x2="765.8" y2="71.4" stroke="#0a6a0a" stroke-width="1.2" />
<line x1="765.8" y1="70.9" x2="765.8" y2="100.7" stroke="#a4a4a4" stroke-width="0.9" />
<line x1="765.8" y1="100.2" x2="819.6" y2="100.2" stroke="#0b0bc2" stroke-width="1.2" />
<line x1="819.6" y1="70.9" x2="819.6" y2="100.7" stroke="#a4a4a4" stroke-width="0.9" />
<line x1="819.6" y1="71.4" x2="861.2" y2="71.4" stroke="#0a6a0a" stroke-width="1.2" />
<line x1="861.2" y1="70.9" x2="861.2" y2="100.7" stroke="#a4a4a4" stroke-width="0.9" />
<line x1="861.2" y1="100.2" x2="915.0" y2="100.2" stroke="#0b0bc2" stroke-width="1.2" />
<line x1="915.0" y1="70.9" x2="915.0" y2="100.7" stroke="#a4a4a4" stroke-width="0.9" />
<line x1="915.0" y1="71.4" x2="956.6" y2="71.4" stroke="#0a6a0a" stroke-width="1.2" />
<line x1="956.6" y1="70.9" x2="956.6" y2="100.7" stroke="#a4a4a4" stroke-width="0.9" />
<line x1="956.6" y1="100.2" x2="992.0" y2="100.2" stroke="#0b0bc2" stroke-width="1.2" />
<line x1="2.0" y1="105.3" x2="54.8" y2="105.3" stroke="#0a6a0a" stroke-width="1.1" />
<line x1="54.8" y1="104.8" x2="54.8" y2="133.9" stroke="#a4a4a4" stroke-width="0.9" />
<line x1="54.8" y1="133.4" x2="98.8" y2="133.4" stroke="#0b0bc2" stroke-width="1.1" />
<line x1="98.8" y1="104.8" x2="98.8" y2="133.9" stroke="#a4a4a4" stroke-width="0.9" />
<line x1="98.8" y1="105.3" x2="153.8" y2="105.3" stroke="#0a6a0a" stroke-width="1.1" />
<line x1="153.8" y1="104.8" x2="153.8" y2="133.9" stroke="#a4a4a4" stroke-width="0.9" />
<line x1="153.8" y1="133.4" x2="197.8" y2="133.4" stroke="#0b0bc2" stroke-width="1.1" />
<line x1="197.8" y1="104.8" x2="197.8" y2="133.9" stroke="#a4a4a4" stroke-width="0.9" />
<line x1="197.8" y1="105.3" x2="252.8" y2="105.3" stroke="#0a6a0a" stroke-width="1.1" />
<line x1="252.8" y1="104.8" x2="252.8" y2="133.9" stroke="#a4a4a4" stroke-width="0.9" />
<line x1="252.8" y1="133.4" x2="296.8" y2="133.4" stroke="#0b0bc2" stroke-width="1.1" />
<line x1="296.8" y1="104.8" x2="296.8" y2="133.9" stroke="#a4a4a4" stroke-width="0.9" />
<line x1="296.8" y1="105.3" x2="351.8" y2="105.3" stroke="#0a6a0a" stroke-width="1.1" />
<line x1="351.8" y1="104.8" x2="351.8" y2="133.9" stroke="#a4a4a4" stroke-width="0.9" />
<line x1="351.8" y1="133.4" x2="395.8" y2="133.4" stroke="#0b0bc2" stroke-width="1.1" />
<line x1="395.8" y1="104.8" x2="395.8" y2="133.9" stroke="#a4a4a4" stroke-width="0.9" />
<line x1="395.8" y1="105.3" x2="450.8" y2="105.3" stroke="#0a6a0a" stroke-width="1.1" />
<line x1="450.8" y1="104.8" x2="450.8" y2="133.9" stroke="#a4a4a4" stroke-width="0.9" />
<line x1="450.8" y1="133.4" x2="742.3" y2="133.4" stroke="#0b0bc2" stroke-width="1.1" />
<line x1="742.3" y1="104.8" x2="742.3" y2="133.9" stroke="#a4a4a4" stroke-width="0.9" />
<line x1="742.3" y1="105.3" x2="796.5" y2="105.3" stroke="#0a6a0a" stroke-width="1.1" />
<line x1="796.5" y1="104.8" x2="796.5" y2="133.9" stroke="#a4a4a4" stroke-width="0.9" />
<line x1="796.5" y1="133.4" x2="841.3" y2="133.4" stroke="#0b0bc2" stroke-width="1.1" />
<line x1="841.3" y1="104.8" x2="841.3" y2="133.9" stroke="#a4a4a4" stroke-width="0.9" />
<line x1="841.3" y1="105.3" x2="895.5" y2="105.3" stroke="#0a6a0a" stroke-width="1.1" />
<line x1="895.5" y1="104.8" x2="895.5" y2="133.9" stroke="#a4a4a4" stroke-width="0.9" />
<line x1="895.5" y1="133.4" x2="940.3" y2="133.4" stroke="#0b0bc2" stroke-width="1.1" />
<line x1="940.3" y1="104.8" x2="940.3" y2="133.9" stroke="#a4a4a4" stroke-width="0.9" />
<line x1="940.3" y1="105.3" x2="992.0" y2="105.3" stroke="#0a6a0a" stroke-width="1.1" />
</g>
<polyline points="2.7,87.3 3.8,84.6 5.1,82.0 6.6,79.5 7.7,78.0 8.9,76.9 10.2,75.6 11.6,74.5 12.1,73.7 12.7,74.1 13.4,73.9 14.7,73.0 16.1,72.3 18.2,72.0 21.0,71.4 22.7,71.0 23.7,71.3 25.5,70.9 26.4,70.6 27.2,71.0 29.2,71.0 31.8,71.0 34.2,70.7 35.7,70.5 37.1,70.5 38.2,70.8 39.2,70.4 40.7,69.9 42.5,69.6 44.7,69.5 47.0,68.9 47.7,68.6 48.3,68.5 49.0,68.8 49.7,69.6 50.3,71.0 51.0,73.6 51.7,77.6 52.4,82.7 53.0,88.7 53.7,95.4 54.4,101.1 55.1,106.3 55.7,111.0 56.4,115.4 57.1,119.4 57.8,122.7 58.4,124.7 59.1,125.8 59.7,126.1 60.4,126.3 61.2,126.0 62.2,125.8 63.1,125.4 64.2,124.8 65.2,124.1 66.7,123.1 66.7,123.8 68.5,124.0 70.1,124.1 72.1,123.6 74.3,123.4 76.4,123.2 78.1,123.5 80.7,123.3 82.6,123.7 85.4,123.9 87.4,124.4 89.0,124.5 90.2,124.0 91.2,123.8 92.2,124.0 93.0,124.4 93.7,124.4 94.3,123.8 94.9,121.7 95.4,117.9 95.9,113.3 96.5,108.1 97.4,102.4 98.6,96.3 99.6,93.0 100.6,90.3 101.7,87.3 102.8,84.6 104.1,82.0 105.6,79.5 106.7,78.0 107.9,76.9 109.2,75.6 110.6,74.5 111.1,73.7 111.7,74.1 112.4,73.9 113.7,73.0 115.1,72.3 117.2,72.0 120.0,71.4 121.7,71.0 122.7,71.3 124.5,70.9 125.4,70.6 126.2,71.0 128.2,71.0 130.8,71.0 133.2,70.7 134.7,70.5 136.1,70.5 137.2,70.8 138.2,70.4 139.7,69.9 141.5,69.6 143.7,69.5 146.0,68.9 146.7,68.6 147.3,68.5 148.0,68.8 148.7,69.6 149.3,71.0 150.1,73.6 150.7,77.6 151.4,82.7 152.1,88.7 152.7,95.4 153.4,101.1 154.1,106.3 154.7,111.0 155.4,115.4 156.1,119.4 156.8,122.7 157.4,124.7 158.1,125.8 158.7,126.1 159.4,126.3 160.2,126.0 161.2,125.8 162.1,125.4 163.2,124.8 164.2,124.1 165.7,123.1 165.7,123.7 167.4,123.6 170.0,123.5 172.3,123.8 174.4,123.9 176.0,123.6 177.8,123.9 179.9,123.8 182.2,123.8 184.2,124.2 186.6,123.9 188.9,123.9 189.2,124.0 190.2,123.8 191.2,124.0 192.0,124.4 192.7,124.4 193.3,123.8 193.9,121.7 194.4,117.9 194.9,113.3 195.5,108.1 196.4,102.4 197.6,96.3 198.6,93.0 199.6,90.3 200.7,87.3 201.8,84.6 203.1,82.0 204.6,79.5 205.7,78.0 206.9,76.9 208.2,75.6 209.6,74.5 210.1,73.7 210.7,74.1 211.4,73.9 212.7,73.0 214.1,72.3 216.2,72.0 219.0,71.4 220.7,71.0 221.7,71.3 223.5,70.9 224.4,70.6 225.2,71.0 227.2,71.0 229.8,71.0 232.2,70.7 233.7,70.5 235.2,70.5 236.2,70.8 237.2,70.4 238.7,69.9 240.5,69.6 242.7,69.5 245.0,68.9 245.7,68.6 246.4,68.5 247.0,68.8 247.7,69.6 248.4,71.0 249.1,73.6 249.7,77.6 250.4,82.7 251.1,88.7 251.7,95.4 252.4,101.1 253.1,106.3 253.7,111.0 254.4,115.4 255.1,119.4 255.8,122.7 256.4,124.7 257.1,125.8 257.7,126.1 258.4,126.3 259.2,126.0 260.2,125.8 261.1,125.4 262.2,124.8 263.2,124.1 264.7,123.1 264.7,124.2 266.6,124.6 268.3,124.3 270.9,123.8 273.1,123.5 275.5,123.9 277.8,124.3 279.7,124.4 282.1,124.3 284.2,124.5 287.0,124.3 288.2,124.0 289.2,123.8 290.2,124.0 291.0,124.4 291.7,124.4 292.3,123.8 292.9,121.7 293.4,117.9 293.9,113.3 294.5,108.1 295.4,102.4 296.6,96.3 297.6,93.0 298.6,90.3 299.7,87.3 300.8,84.6 302.1,82.0 303.6,79.5 304.7,78.0 305.9,76.9 307.2,75.6 308.6,74.5 309.1,73.7 309.7,74.1 310.4,73.9 311.7,73.0 313.1,72.3 315.2,72.0 318.0,71.4 319.7,71.0 320.7,71.3 322.5,70.9 323.4,70.6 324.2,71.0 326.2,71.0 328.8,71.0 331.2,70.7 332.7,70.5 334.1,70.5 335.2,70.8 336.2,70.4 337.7,69.9 339.5,69.6 341.7,69.5 344.0,68.9 344.7,68.6 345.4,68.5 346.0,68.8 346.7,69.6 347.4,71.0 348.1,73.6 348.7,77.6 349.4,82.7 350.1,88.7 350.7,95.4 351.4,101.1 352.1,106.3 352.7,111.0 353.4,115.4 354.1,119.4 354.8,122.7 355.4,124.7 356.1,125.8 356.7,126.1 357.4,126.3 358.2,126.0 359.2,125.8 360.1,125.4 361.2,124.8 362.2,124.1 363.7,123.1 363.7,123.6 366.2,123.9 369.0,124.2 371.0,124.0 373.4,123.6 375.5,123.5 377.2,123.3 379.8,123.2 381.6,123.4 384.3,123.3 386.5,123.6 387.2,124.0 388.2,123.8 389.2,124.0 390.0,124.4 390.7,124.4 391.3,123.8 391.9,121.7 392.4,117.9 392.9,113.3 393.5,108.1 394.4,102.4 395.6,96.3 396.6,93.0 397.6,90.3 398.7,87.3 399.8,84.6 401.1,82.0 402.6,79.5 403.7,78.0 404.9,76.9 406.2,75.6 407.6,74.5 408.1,73.7 408.7,74.1 409.4,73.9 410.7,73.0 412.1,72.3 414.2,72.0 417.0,71.4 418.7,71.0 419.7,71.3 421.5,70.9 422.4,70.6 423.2,71.0 425.2,71.0 427.8,71.0 430.2,70.7 431.7,70.5 433.1,70.5 434.2,70.8 435.2,70.4 436.7,69.9 438.5,69.6 440.7,69.5 443.0,68.9 443.7,68.6 444.4,68.5 445.0,68.8 445.7,69.6 446.4,71.0 447.1,73.6 447.7,77.6 448.4,82.7 449.1,88.7 449.7,95.4 450.4,101.1 451.1,106.3 451.7,111.0 452.4,115.4 453.1,119.4 453.8,122.7 454.4,124.7 455.1,125.8 455.7,126.1 456.4,126.3 457.2,126.0 458.2,125.8 459.1,125.4 460.2,124.8 461.2,124.1 462.7,123.1 462.7,124.1 465.4,123.8 467.5,123.7 470.2,124.2 471.9,123.8 473.8,123.6 476.0,123.8 477.9,123.3 479.9,123.4 482.2,124.0 484.7,124.0 487.0,124.1 488.6,123.8 489.5,124.0 490.1,123.6 490.9,122.6 491.3,120.4 491.8,117.2 492.4,111.8 493.1,106.3 493.6,103.5 494.2,101.8 494.6,101.0 495.0,100.9 495.4,101.4 495.8,102.7 496.4,105.5 497.1,109.9 497.8,114.1 498.5,118.1 499.1,121.0 499.9,123.0 500.3,124.0 500.7,124.5 501.6,124.4 501.6,124.4 504.2,124.6 506.8,124.2 508.9,123.8 511.3,123.5 512.9,123.4 514.6,123.5 516.2,123.3 518.0,123.2 520.0,123.1 522.7,123.6 524.4,123.5 526.4,123.6 528.1,124.1 531.0,124.0 533.2,123.6 534.8,123.6 536.7,124.1 538.5,123.6 541.3,123.8 543.0,123.9 544.6,124.0 547.4,124.3 549.9,124.0 551.9,123.7 554.5,123.8 557.0,123.8 558.9,124.1 561.7,124.4 564.3,124.5 566.8,124.1 569.1,123.9 570.6,123.5 572.5,123.5 575.0,124.1 577.1,124.5 580.0,124.7 582.0,124.2 583.8,123.8 585.6,124.0 588.4,124.3 590.5,124.3 593.1,123.8 595.5,124.3 598.1,124.4 600.3,123.9 602.9,123.8 605.5,124.3 607.5,124.1 610.3,124.3 612.1,123.8 613.8,124.3 616.4,123.8 619.1,124.3 621.5,124.1 623.7,123.7 625.3,124.2 627.7,124.2 630.5,124.0 633.2,124.3 635.0,124.0 636.9,123.7 639.2,123.6 641.3,123.4 644.0,123.5 646.2,123.8 648.9,123.8 651.7,123.9 653.9,124.0 655.5,123.9 657.3,123.5 659.9,123.4 662.0,123.8 664.3,123.8 666.5,123.9 669.1,123.6 671.4,123.5 673.3,124.0 675.5,124.0 678.0,124.4 680.2,124.3 682.4,124.2 684.8,124.1 687.1,124.0 689.9,124.2 692.5,124.5 694.4,124.4 697.2,124.5 698.9,124.0 701.1,123.6 702.9,123.4 705.3,123.9 708.1,123.6 710.6,123.9 712.3,124.3 715.1,123.9 717.9,123.9 720.1,124.4 722.7,123.9 724.8,124.0 726.8,123.7 728.8,124.0 730.3,124.1 732.5,123.6 733.7,124.0 734.7,123.8 735.7,124.0 736.5,124.4 737.2,124.4 737.8,123.8 738.4,121.7 738.9,117.9 739.4,113.3 740.0,108.1 740.9,102.4 742.1,96.3 743.1,93.0 744.1,90.3 745.2,87.3 746.3,84.6 747.6,82.0 749.1,79.5 750.2,78.0 751.4,76.9 752.7,75.6 754.1,74.5 754.6,73.7 755.2,74.1 755.9,73.9 757.2,73.0 758.6,72.3 760.7,72.0 763.5,71.4 765.2,71.0 766.2,71.3 768.0,70.9 768.9,70.6 769.7,71.0 771.7,71.0 774.3,71.0 776.7,70.7 778.2,70.5 779.6,70.5 780.7,70.8 781.7,70.4 783.2,69.9 785.0,69.6 787.2,69.5 789.5,68.9 790.2,68.6 790.8,68.5 791.5,68.8 792.2,69.6 792.8,71.0 793.5,73.6 794.2,77.6 794.9,82.7 795.5,88.7 796.2,95.4 796.9,101.1 797.6,106.3 798.2,111.0 798.9,115.4 799.6,119.4 800.3,122.7 800.9,124.7 801.6,125.8 802.2,126.1 802.9,126.3 803.7,126.0 804.7,125.8 805.6,125.4 806.7,124.8 807.7,124.1 809.2,123.1 809.2,124.1 811.4,123.7 814.3,124.1 817.1,123.7 819.0,123.4 821.6,123.4 823.3,123.6 826.0,124.0 827.9,123.7 830.7,123.9 832.7,124.0 833.7,123.8 834.7,124.0 835.5,124.4 836.2,124.4 836.8,123.8 837.4,121.7 837.9,117.9 838.4,113.3 839.0,108.1 839.9,102.4 841.1,96.3 842.1,93.0 843.1,90.3 844.2,87.3 845.3,84.6 846.6,82.0 848.1,79.5 849.2,78.0 850.4,76.9 851.7,75.6 853.1,74.5 853.6,73.7 854.2,74.1 854.9,73.9 856.2,73.0 857.6,72.3 859.7,72.0 862.5,71.4 864.2,71.0 865.2,71.3 867.0,70.9 867.9,70.6 868.7,71.0 870.7,71.0 873.3,71.0 875.7,70.7 877.2,70.5 878.6,70.5 879.7,70.8 880.7,70.4 882.2,69.9 884.0,69.6 886.2,69.5 888.5,68.9 889.2,68.6 889.8,68.5 890.5,68.8 891.2,69.6 891.8,71.0 892.5,73.6 893.2,77.6 893.9,82.7 894.5,88.7 895.2,95.4 895.9,101.1 896.6,106.3 897.2,111.0 897.9,115.4 898.6,119.4 899.3,122.7 899.9,124.7 900.6,125.8 901.2,126.1 901.9,126.3 902.7,126.0 903.7,125.8 904.6,125.4 905.7,124.8 906.7,124.1 908.2,123.1 908.2,123.6 909.8,123.9 911.9,123.6 914.7,123.9 917.3,123.5 920.0,123.3 922.7,123.6 924.7,123.8 927.4,123.7 929.1,123.8 931.0,123.5 931.7,124.0 932.7,123.8 933.7,124.0 934.5,124.4 935.2,124.4 935.8,123.8 936.4,121.7 936.9,117.9 937.4,113.3 938.0,108.1 938.9,102.4 940.1,96.3 941.1,93.0 942.1,90.3 943.2,87.3 944.3,84.6 945.6,82.0 947.1,79.5 948.2,78.0 949.4,76.9 950.7,75.6 952.1,74.5 952.6,73.7 953.2,74.1 953.9,73.9 955.2,73.0 956.6,72.3 958.7,72.0 961.5,71.4 963.2,71.0 964.2,71.3 966.0,70.9 966.9,70.6 967.7,71.0 969.7,71.0 972.3,71.0 974.7,70.7 976.2,70.5 977.6,70.5 978.7,70.8 979.7,70.4 981.2,69.9 983.0,69.6 985.2,69.5 987.5,68.9 988.2,68.6 988.8,68.5 989.5,68.8 990.2,69.6 990.8,71.0 991.5,73.6" fill="none" stroke="#c9b822" stroke-width="1.0" stroke-linejoin="round" stroke-linecap="round" />
<rect x="374.7" y="33.4" width="245.2" height="103.2" fill="none" stroke="#a9a9a9" stroke-width="2.8"/>
<text x="101.3" y="135.2" font-size="7.6" fill="#d0d0d0" text-anchor="middle" font-weight="normal" >-400 ns</text>
<text x="200.4" y="135.2" font-size="7.6" fill="#d0d0d0" text-anchor="middle" font-weight="normal" >-300 ns</text>
<text x="299.4" y="135.2" font-size="7.6" fill="#d0d0d0" text-anchor="middle" font-weight="normal" >-200 ns</text>
<text x="398.4" y="135.2" font-size="7.6" fill="#d0d0d0" text-anchor="middle" font-weight="normal" >-100 ns</text>
<text x="497.5" y="135.2" font-size="7.6" fill="#d0d0d0" text-anchor="middle" font-weight="normal" >0 s</text>
<text x="596.5" y="135.2" font-size="7.6" fill="#d0d0d0" text-anchor="middle" font-weight="normal" >100 ns</text>
<text x="695.6" y="135.2" font-size="7.6" fill="#d0d0d0" text-anchor="middle" font-weight="normal" >200 ns</text>
<text x="794.6" y="135.2" font-size="7.6" fill="#d0d0d0" text-anchor="middle" font-weight="normal" >300 ns</text>
<text x="893.7" y="135.2" font-size="7.6" fill="#d0d0d0" text-anchor="middle" font-weight="normal" >400 ns</text>
<text x="981.8" y="54.7" font-size="7.6" fill="#e6d626" text-anchor="end" font-weight="normal" >3.50</text>
<text x="988.4" y="65.2" font-size="7.6" fill="#e6d626" text-anchor="end" font-weight="normal" >3 V</text>
<text x="988.4" y="75.7" font-size="7.6" fill="#e6d626" text-anchor="end" font-weight="normal" >2.50 V</text>
<text x="988.4" y="96.7" font-size="7.6" fill="#e6d626" text-anchor="end" font-weight="normal" >1.50 V</text>
<text x="988.4" y="118.7" font-size="7.6" fill="#e6d626" text-anchor="end" font-weight="normal" >500 mV</text>
<text x="988.4" y="129.0" font-size="7.6" fill="#e6d626" text-anchor="end" font-weight="normal" >0 V</text>
<text x="983.4" y="87.0" font-size="7.6" fill="#e6d626" text-anchor="end" font-weight="normal" >2</text>
<text x="983.4" y="108.0" font-size="7.6" fill="#e6d626" text-anchor="end" font-weight="normal" >1</text>
<path d="M992 83.5H987.3V78.7Q984.6 82.6 980.8 84.5Q984.6 86.4 987.3 90.3V85.5H992Z" fill="#f6e624"/>
<path d="M992 104.5H987.3V99.7Q984.6 103.6 980.8 105.5Q984.6 107.4 987.3 111.3V106.5H992Z" fill="#f6e624"/>
<path d="M970.2 36H988V54Z" fill="#505050" stroke="#27b7d6" stroke-width="1.2" stroke-linejoin="round"/>
<path d="M978.8 46.9L983.4 41.2" stroke="#27b7d6" stroke-width="1.4" fill="none"/>
<circle cx="984.8" cy="39.6" r="2.1" fill="#3a3a3a" stroke="#27b7d6" stroke-width="1.1"/>
<path d="M2.6 137.5V34.5Q2.6 32.6 4.5 32.6H11Q12.9 32.6 12.9 34.5V137.5" fill="none" stroke="#22a9b5" stroke-width="1"/>
<path d="M4.6 35.2h6M4.6 37h6M4.6 133.6h6M4.6 135.4h6" stroke="#8a8a8a" stroke-width="0.8"/>
<path d="M13 39.1Q13 37.6 14.5 37.6H30.6L28.2 41.2V62.699999999999996L30.6 66.3H14.5Q13 66.3 13 64.8Z" fill="#43383f" stroke="#b48ab4" stroke-width="1"/>
<text x="21.2" y="53.9" font-size="5.8" fill="#b48ab4" text-anchor="middle" font-weight="normal" >D7</text>
<path d="M13 73.1Q13 71.6 14.5 71.6H30.6L28.2 75.19999999999999V96.4L30.6 100.0H14.5Q13 100.0 13 98.5Z" fill="#3d433d" stroke="#7f957f" stroke-width="1"/>
<text x="21.2" y="87.7" font-size="5.8" fill="#93a893" text-anchor="middle" font-weight="normal" >D5</text>
<path d="M13 105.9Q13 104.4 14.5 104.4H30.6L28.2 108.0V129.8L30.6 133.4H14.5Q13 133.4 13 131.9Z" fill="#4b3a30" stroke="#b9713f" stroke-width="1"/>
<text x="21.2" y="120.8" font-size="5.8" fill="#c97a45" text-anchor="middle" font-weight="normal" >D3</text>
<text x="7.6" y="87.6" font-size="5.2" fill="#22a9b5" text-anchor="middle" font-weight="normal" >C2</text>
<text x="34.8" y="54.4" font-size="11.3" fill="#3fc4c8" text-anchor="start" font-weight="normal" textLength="66.9" lengthAdjust="spacingAndGlyphs" stroke="#3fc4c8" stroke-width="0.2">20 MHz Clock</text>
<text x="34.8" y="88.8" font-size="11.3" fill="#3fc4c8" text-anchor="start" font-weight="normal" textLength="63.8" lengthAdjust="spacingAndGlyphs" stroke="#3fc4c8" stroke-width="0.2">10 MHz Data</text>
<text x="34.8" y="122.6" font-size="11.3" fill="#3fc4c8" text-anchor="start" font-weight="normal" textLength="106.8" lengthAdjust="spacingAndGlyphs" stroke="#3fc4c8" stroke-width="0.2">Q Output Metastable</text>
<line x1="15.4" y1="127.4" x2="976.0" y2="127.4" stroke="#c4c4c4" stroke-width="0.8" stroke-dasharray="3.2 2.4"/>
<path d="M3.6 123.4H12.2L15.3 127.2L12.2 131H3.6Z" fill="#f6e83a"/>
<text x="8.4" y="129.2" font-size="5.4" fill="#3a3600" text-anchor="middle" font-weight="bold" >C 1</text>
<line x1="479.6" y1="31.5" x2="479.6" y2="138.0" stroke="#dcdcdc" stroke-width="1.3" />
<line x1="485.6" y1="31.5" x2="485.6" y2="138.0" stroke="#dcdcdc" stroke-width="1.3" />
<path d="M491.8 31.4H502.6L497.2 36.6Z" fill="#f58a1f"/>
<path d="M492.6 38.2H502.6V48.2H499.7L497.5 52.2L495.3 48.2H492.6Z" fill="none" stroke="#ee861e" stroke-width="1.7"/>
<text x="497.5" y="46.3" font-size="8.2" fill="#ee861e" text-anchor="middle" font-weight="bold" >T</text>
<line x1="497.5" y1="53.4" x2="497.5" y2="135.0" stroke="#a6a6a6" stroke-width="0.9" stroke-dasharray="3.6 2.2"/>
<rect x="467.5" y="34.3" width="10" height="10.6" rx="1.8" fill="#19b3b9"/>
<text x="470.2" y="42.6" font-size="8" fill="#0a3d42" text-anchor="start" font-weight="normal" >C</text>
<circle cx="479.2" cy="39.3" r="5.3" fill="#2f3236" opacity="0.6"/>
<circle cx="479.0" cy="39.2" r="4.9" fill="#2d8fe0"/>
<text x="479.0" y="42.0" font-size="7.4" fill="#eaf4ff" text-anchor="middle" font-weight="normal" >B</text>
<rect x="486.3" y="34.3" width="11.6" height="10.6" rx="1.8" fill="#19b3b9"/>
<text x="492.1" y="42.6" font-size="8.4" fill="#0a3d42" text-anchor="middle" font-weight="normal" >CI</text>
<rect x="2.0" y="152.0" width="990.0" height="411.6" fill="#000" />
<path d="M22 315.5h1M41 315.5h1M61 315.5h1M81 315.5h1M121 315.5h1M141 315.5h1M161 315.5h1M180 315.5h1M220 315.5h1M240 315.5h1M260 315.5h1M280 315.5h1M319 315.5h1M339 315.5h1M359 315.5h1M379 315.5h1M418 315.5h1M438 315.5h1M458 315.5h1M478 315.5h1M518 315.5h1M537 315.5h1M557 315.5h1M577 315.5h1M617 315.5h1M637 315.5h1M657 315.5h1M676 315.5h1M716 315.5h1M736 315.5h1M756 315.5h1M776 315.5h1M815 315.5h1M835 315.5h1M855 315.5h1M875 315.5h1M914 315.5h1M934 315.5h1M954 315.5h1M974 315.5h1M22 294.5h1M41 294.5h1M61 294.5h1M81 294.5h1M121 294.5h1M141 294.5h1M161 294.5h1M180 294.5h1M220 294.5h1M240 294.5h1M260 294.5h1M280 294.5h1M319 294.5h1M339 294.5h1M359 294.5h1M379 294.5h1M418 294.5h1M438 294.5h1M458 294.5h1M478 294.5h1M518 294.5h1M537 294.5h1M557 294.5h1M577 294.5h1M617 294.5h1M637 294.5h1M657 294.5h1M676 294.5h1M716 294.5h1M736 294.5h1M756 294.5h1M776 294.5h1M815 294.5h1M835 294.5h1M855 294.5h1M875 294.5h1M914 294.5h1M934 294.5h1M954 294.5h1M974 294.5h1M22 274.5h1M41 274.5h1M61 274.5h1M81 274.5h1M121 274.5h1M141 274.5h1M161 274.5h1M180 274.5h1M220 274.5h1M240 274.5h1M260 274.5h1M280 274.5h1M319 274.5h1M339 274.5h1M359 274.5h1M379 274.5h1M418 274.5h1M438 274.5h1M458 274.5h1M478 274.5h1M518 274.5h1M537 274.5h1M557 274.5h1M577 274.5h1M617 274.5h1M637 274.5h1M657 274.5h1M676 274.5h1M716 274.5h1M736 274.5h1M756 274.5h1M776 274.5h1M815 274.5h1M835 274.5h1M855 274.5h1M875 274.5h1M914 274.5h1M934 274.5h1M954 274.5h1M974 274.5h1M22 253.5h1M41 253.5h1M61 253.5h1M81 253.5h1M121 253.5h1M141 253.5h1M161 253.5h1M180 253.5h1M220 253.5h1M240 253.5h1M260 253.5h1M280 253.5h1M319 253.5h1M339 253.5h1M359 253.5h1M379 253.5h1M418 253.5h1M438 253.5h1M458 253.5h1M478 253.5h1M518 253.5h1M537 253.5h1M557 253.5h1M577 253.5h1M617 253.5h1M637 253.5h1M657 253.5h1M676 253.5h1M716 253.5h1M736 253.5h1M756 253.5h1M776 253.5h1M815 253.5h1M835 253.5h1M855 253.5h1M875 253.5h1M914 253.5h1M934 253.5h1M954 253.5h1M974 253.5h1M22 233.5h1M41 233.5h1M61 233.5h1M81 233.5h1M121 233.5h1M141 233.5h1M161 233.5h1M180 233.5h1M220 233.5h1M240 233.5h1M260 233.5h1M280 233.5h1M319 233.5h1M339 233.5h1M359 233.5h1M379 233.5h1M418 233.5h1M438 233.5h1M458 233.5h1M478 233.5h1M518 233.5h1M537 233.5h1M557 233.5h1M577 233.5h1M617 233.5h1M637 233.5h1M657 233.5h1M676 233.5h1M716 233.5h1M736 233.5h1M756 233.5h1M776 233.5h1M815 233.5h1M835 233.5h1M855 233.5h1M875 233.5h1M914 233.5h1M934 233.5h1M954 233.5h1M974 233.5h1M22 212.5h1M41 212.5h1M61 212.5h1M81 212.5h1M121 212.5h1M141 212.5h1M161 212.5h1M180 212.5h1M220 212.5h1M240 212.5h1M260 212.5h1M280 212.5h1M319 212.5h1M339 212.5h1M359 212.5h1M379 212.5h1M418 212.5h1M438 212.5h1M458 212.5h1M478 212.5h1M518 212.5h1M537 212.5h1M557 212.5h1M577 212.5h1M617 212.5h1M637 212.5h1M657 212.5h1M676 212.5h1M716 212.5h1M736 212.5h1M756 212.5h1M776 212.5h1M815 212.5h1M835 212.5h1M855 212.5h1M875 212.5h1M914 212.5h1M934 212.5h1M954 212.5h1M974 212.5h1M22 192.5h1M41 192.5h1M61 192.5h1M81 192.5h1M121 192.5h1M141 192.5h1M161 192.5h1M180 192.5h1M220 192.5h1M240 192.5h1M260 192.5h1M280 192.5h1M319 192.5h1M339 192.5h1M359 192.5h1M379 192.5h1M418 192.5h1M438 192.5h1M458 192.5h1M478 192.5h1M518 192.5h1M537 192.5h1M557 192.5h1M577 192.5h1M617 192.5h1M637 192.5h1M657 192.5h1M676 192.5h1M716 192.5h1M736 192.5h1M756 192.5h1M776 192.5h1M815 192.5h1M835 192.5h1M855 192.5h1M875 192.5h1M914 192.5h1M934 192.5h1M954 192.5h1M974 192.5h1M22 171.5h1M41 171.5h1M61 171.5h1M81 171.5h1M121 171.5h1M141 171.5h1M161 171.5h1M180 171.5h1M220 171.5h1M240 171.5h1M260 171.5h1M280 171.5h1M319 171.5h1M339 171.5h1M359 171.5h1M379 171.5h1M418 171.5h1M438 171.5h1M458 171.5h1M478 171.5h1M518 171.5h1M537 171.5h1M557 171.5h1M577 171.5h1M617 171.5h1M637 171.5h1M657 171.5h1M676 171.5h1M716 171.5h1M736 171.5h1M756 171.5h1M776 171.5h1M815 171.5h1M835 171.5h1M855 171.5h1M875 171.5h1M914 171.5h1M934 171.5h1M954 171.5h1M974 171.5h1M22 151.5h1M41 151.5h1M61 151.5h1M81 151.5h1M121 151.5h1M141 151.5h1M161 151.5h1M180 151.5h1M220 151.5h1M240 151.5h1M260 151.5h1M280 151.5h1M319 151.5h1M339 151.5h1M359 151.5h1M379 151.5h1M418 151.5h1M438 151.5h1M458 151.5h1M478 151.5h1M518 151.5h1M537 151.5h1M557 151.5h1M577 151.5h1M617 151.5h1M637 151.5h1M657 151.5h1M676 151.5h1M716 151.5h1M736 151.5h1M756 151.5h1M776 151.5h1M815 151.5h1M835 151.5h1M855 151.5h1M875 151.5h1M914 151.5h1M934 151.5h1M954 151.5h1M974 151.5h1" stroke="#4c4c4c" stroke-width="1" fill="none" shape-rendering="crispEdges"/>
<path d="M3 352.5h1M3 348.5h1M3 343.5h1M3 339.5h1M3 335.5h1M3 331.5h1M3 327.5h1M3 323.5h1M3 319.5h1M3 315.5h1M3 311.5h1M3 307.5h1M3 302.5h1M3 298.5h1M3 294.5h1M3 290.5h1M3 286.5h1M3 282.5h1M3 278.5h1M3 274.5h1M3 270.5h1M3 266.5h1M3 261.5h1M3 257.5h1M3 253.5h1M3 249.5h1M3 245.5h1M3 241.5h1M3 237.5h1M3 233.5h1M3 229.5h1M3 225.5h1M3 220.5h1M3 216.5h1M3 212.5h1M3 208.5h1M3 204.5h1M3 200.5h1M3 196.5h1M3 192.5h1M3 188.5h1M3 184.5h1M3 179.5h1M3 175.5h1M3 171.5h1M3 167.5h1M3 163.5h1M3 159.5h1M3 155.5h1" stroke="#4a4a4a" stroke-width="1" fill="none" shape-rendering="crispEdges"/>
<line x1="101.5" y1="153.5" x2="101.5" y2="563.0" stroke="#5a5a5a" stroke-width="1" stroke-dasharray="1 3" shape-rendering="crispEdges"/>
<line x1="200.5" y1="153.5" x2="200.5" y2="563.0" stroke="#5a5a5a" stroke-width="1" stroke-dasharray="1 3" shape-rendering="crispEdges"/>
<line x1="299.5" y1="153.5" x2="299.5" y2="563.0" stroke="#5a5a5a" stroke-width="1" stroke-dasharray="1 3" shape-rendering="crispEdges"/>
<line x1="399.5" y1="153.5" x2="399.5" y2="563.0" stroke="#5a5a5a" stroke-width="1" stroke-dasharray="1 3" shape-rendering="crispEdges"/>
<line x1="498.5" y1="153.5" x2="498.5" y2="563.0" stroke="#5a5a5a" stroke-width="1" stroke-dasharray="1 3" shape-rendering="crispEdges"/>
<line x1="597.5" y1="153.5" x2="597.5" y2="563.0" stroke="#5a5a5a" stroke-width="1" stroke-dasharray="1 3" shape-rendering="crispEdges"/>
<line x1="696.5" y1="153.5" x2="696.5" y2="563.0" stroke="#5a5a5a" stroke-width="1" stroke-dasharray="1 3" shape-rendering="crispEdges"/>
<line x1="795.5" y1="153.5" x2="795.5" y2="563.0" stroke="#5a5a5a" stroke-width="1" stroke-dasharray="1 3" shape-rendering="crispEdges"/>
<line x1="895.5" y1="153.5" x2="895.5" y2="563.0" stroke="#5a5a5a" stroke-width="1" stroke-dasharray="1 3" shape-rendering="crispEdges"/>
<line x1="26.4" y1="336.3" x2="975.0" y2="336.3" stroke="#7e7e7e" stroke-width="1" stroke-dasharray="3.2 2.6"/>
<polyline points="2.0,328.9 5.7,328.9 9.7,329.2 13.6,329.2 17.2,329.1 20.4,329.0 23.6,329.2 28.3,329.0 32.7,329.4 36.1,329.5 40.4,329.4 45.8,329.2 50.4,329.3 56.2,329.2 60.0,329.0 64.0,328.7 68.0,329.0 71.0,329.7 74.0,329.8 76.4,328.6 78.6,324.5 80.6,317.0 82.6,308.0 85.2,297.7 88.6,286.4 93.4,274.4 97.4,267.8 101.5,262.6 105.8,256.6 110.4,251.3 115.4,246.2 121.4,241.2 126.0,238.4 130.8,236.1 136.0,233.6 141.6,231.4 143.4,229.8 146.0,230.6 148.7,230.2 154.0,228.4 159.5,227.1 168.0,226.4 179.2,225.3 186.0,224.6 190.0,225.1 197.0,224.4 200.7,223.8 204.0,224.6 212.0,224.5 222.2,224.6 232.0,224.0 238.0,223.6 243.7,223.5 248.0,224.1 252.0,223.3 258.0,222.4 265.2,221.7 274.0,221.5 283.2,220.3 286.0,219.7 288.5,219.6 291.0,220.1 293.9,221.7 296.5,224.6 299.3,229.6 302.0,237.5 304.7,247.5 307.3,259.5 310.0,272.6 312.7,283.8 315.4,294.1 318.0,303.4 320.8,312.0 323.5,320.0 326.2,326.4 328.8,330.4 331.5,332.5 334.0,333.2 336.9,333.5 340.0,333.0 344.0,332.6 347.7,331.8 352.0,330.5 356.0,329.2 362.0,327.3 372.8,326.6 378.0,327.2 383.5,328.2 388.0,329.2 393.4,329.1 398.0,328.8 401.8,328.7 407.6,328.7 411.6,328.6 417.6,329.0 423.1,328.9 427.3,328.9 432.2,328.8 437.0,328.8 443.4,329.2 448.6,329.0 455.0,328.9 459.5,328.7 464.2,328.8 466.0,328.7 469.5,328.9 472.0,328.2 474.9,326.2 476.6,322.0 478.5,315.6 481.0,305.0 483.9,294.1 486.0,288.6 488.2,285.2 490.0,283.7 491.5,283.4 493.0,284.4 494.6,287.0 497.0,292.6 500.0,301.3 502.6,309.5 505.4,317.4 508.0,323.0 510.8,327.1 512.6,329.0 514.3,330.0 518.0,329.7 524.0,329.4 530.5,328.9 541.0,329.8 548.0,329.0 555.5,328.2 562.0,327.6 568.1,327.3 571.0,328.0 574.0,329.5 578.8,331.0 590.0,330.6 600.0,330.1 612.9,330.0 624.0,329.4 634.0,328.9 636.0,328.0 638.0,327.1 641.0,328.6 645.0,329.9 652.0,330.4 660.0,330.6 670.2,331.0 673.0,329.8 676.0,327.2 679.2,325.7 682.5,326.8 686.0,328.0 691.7,328.9 700.0,329.6 712.0,330.8 724.0,331.8 733.0,331.2 742.0,330.0 752.0,329.4 763.4,328.9 770.0,329.6 781.0,330.6 790.0,329.6 795.7,329.2 804.0,330.6 813.6,331.8 822.0,330.2 831.5,329.2 845.0,329.4 856.0,329.8 867.4,330.0 873.0,328.8 877.0,327.4 880.0,327.1 884.0,328.2 888.0,329.9 892.5,330.7 905.0,330.4 917.5,331.0 930.0,330.8 939.0,331.0 947.0,330.4 953.4,330.0 959.0,328.9 964.1,328.5 969.0,330.0 975.0,331.8 982.0,330.9 987.0,330.6 992.0,330.8" fill="none" stroke="#bcaa14" stroke-width="1.1" stroke-linejoin="round" stroke-linecap="round" />
<text x="101.5" y="354.4" font-size="7.6" fill="#c9c9c9" text-anchor="middle" font-weight="normal" >-100 ns</text>
<text x="200.7" y="354.4" font-size="7.6" fill="#c9c9c9" text-anchor="middle" font-weight="normal" >-75 ns</text>
<text x="299.9" y="354.4" font-size="7.6" fill="#c9c9c9" text-anchor="middle" font-weight="normal" >-50 ns</text>
<text x="399.1" y="354.4" font-size="7.6" fill="#c9c9c9" text-anchor="middle" font-weight="normal" >-25 ns</text>
<text x="498.3" y="354.4" font-size="7.6" fill="#c9c9c9" text-anchor="middle" font-weight="normal" >0 s</text>
<text x="597.5" y="354.4" font-size="7.6" fill="#c9c9c9" text-anchor="middle" font-weight="normal" >25 ns</text>
<text x="696.7" y="354.4" font-size="7.6" fill="#c9c9c9" text-anchor="middle" font-weight="normal" >50 ns</text>
<text x="795.9" y="354.4" font-size="7.6" fill="#c9c9c9" text-anchor="middle" font-weight="normal" >75 ns</text>
<text x="895.1" y="354.4" font-size="7.6" fill="#c9c9c9" text-anchor="middle" font-weight="normal" >100 ns</text>
<line x1="2.0" y1="357.3" x2="992.0" y2="357.3" stroke="#747474" stroke-width="1" />
<path d="M2.3 355.6v1.6M22.1 355.6v1.6M42.0 355.6v1.6M61.8 355.6v1.6M81.7 355.6v1.6M101.5 355.6v1.6M121.3 355.6v1.6M141.2 355.6v1.6M161.0 355.6v1.6M180.9 355.6v1.6M200.7 355.6v1.6M220.5 355.6v1.6M240.4 355.6v1.6M260.2 355.6v1.6M280.1 355.6v1.6M299.9 355.6v1.6M319.7 355.6v1.6M339.6 355.6v1.6M359.4 355.6v1.6M379.3 355.6v1.6M399.1 355.6v1.6M418.9 355.6v1.6M438.8 355.6v1.6M458.6 355.6v1.6M478.5 355.6v1.6M498.3 355.6v1.6M518.1 355.6v1.6M538.0 355.6v1.6M557.8 355.6v1.6M577.7 355.6v1.6M597.5 355.6v1.6M617.3 355.6v1.6M637.2 355.6v1.6M657.0 355.6v1.6M676.9 355.6v1.6M696.7 355.6v1.6M716.5 355.6v1.6M736.4 355.6v1.6M756.2 355.6v1.6M776.1 355.6v1.6M795.9 355.6v1.6M815.7 355.6v1.6M835.6 355.6v1.6M855.4 355.6v1.6M875.3 355.6v1.6M895.1 355.6v1.6M914.9 355.6v1.6M934.8 355.6v1.6M954.6 355.6v1.6M974.5 355.6v1.6" stroke="#7d7d7d" stroke-width="1" fill="none"/>
<text x="988.6" y="173.7" font-size="7.6" fill="#e3d324" text-anchor="end" font-weight="normal" >4 V</text>
<text x="988.6" y="194.2" font-size="7.6" fill="#e3d324" text-anchor="end" font-weight="normal" >3.50 V</text>
<text x="988.6" y="214.7" font-size="7.6" fill="#e3d324" text-anchor="end" font-weight="normal" >3 V</text>
<text x="988.6" y="235.2" font-size="7.6" fill="#e3d324" text-anchor="end" font-weight="normal" >2.50 V</text>
<text x="988.6" y="276.2" font-size="7.6" fill="#e3d324" text-anchor="end" font-weight="normal" >1.50 V</text>
<text x="988.6" y="317.2" font-size="7.6" fill="#e3d324" text-anchor="end" font-weight="normal" >500 mV</text>
<text x="988.6" y="337.7" font-size="7.6" fill="#e3d324" text-anchor="end" font-weight="normal" >0 V</text>
<text x="983.4" y="256.1" font-size="7.6" fill="#e3d324" text-anchor="end" font-weight="normal" >2</text>
<text x="983.4" y="297.1" font-size="7.6" fill="#e3d324" text-anchor="end" font-weight="normal" >1</text>
<path d="M992 252.8H987.3V247.9Q984.6 251.8 980.8 253.7Q984.6 255.6 987.3 259.5V254.6H992Z" fill="#f6e624"/>
<path d="M992 293.8H987.3V288.9Q984.6 292.8 980.8 294.7Q984.6 296.6 987.3 300.5V295.6H992Z" fill="#f6e624"/>
<path d="M4 329H17.8L23.3 335.8L17.8 342.6H4Z" fill="#f6e83a"/>
<text x="12.4" y="338.2" font-size="6.4" fill="#3a3600" text-anchor="middle" font-weight="bold" >C 1</text>
<line x1="2.0" y1="435.4" x2="56.3" y2="435.4" stroke="#0909b6" stroke-width="1.1" />
<line x1="56.3" y1="393.6" x2="56.3" y2="435.9" stroke="#7c7c7c" stroke-width="1.7" />
<line x1="56.3" y1="394.1" x2="145.3" y2="394.1" stroke="#066806" stroke-width="1.1" />
<line x1="145.3" y1="393.6" x2="145.3" y2="435.9" stroke="#7c7c7c" stroke-width="1.7" />
<line x1="145.3" y1="435.4" x2="253.4" y2="435.4" stroke="#0909b6" stroke-width="1.1" />
<line x1="253.4" y1="393.6" x2="253.4" y2="435.9" stroke="#7c7c7c" stroke-width="1.7" />
<line x1="253.4" y1="394.1" x2="342.3" y2="394.1" stroke="#066806" stroke-width="1.1" />
<line x1="342.3" y1="393.6" x2="342.3" y2="435.9" stroke="#7c7c7c" stroke-width="1.7" />
<line x1="342.3" y1="435.4" x2="452.6" y2="435.4" stroke="#0909b6" stroke-width="1.1" />
<line x1="452.6" y1="393.6" x2="452.6" y2="435.9" stroke="#7c7c7c" stroke-width="1.7" />
<line x1="452.6" y1="394.1" x2="541.6" y2="394.1" stroke="#066806" stroke-width="1.1" />
<line x1="541.6" y1="393.6" x2="541.6" y2="435.9" stroke="#7c7c7c" stroke-width="1.7" />
<line x1="541.6" y1="435.4" x2="649.5" y2="435.4" stroke="#0909b6" stroke-width="1.1" />
<line x1="649.5" y1="393.6" x2="649.5" y2="435.9" stroke="#7c7c7c" stroke-width="1.7" />
<line x1="649.5" y1="394.1" x2="738.3" y2="394.1" stroke="#066806" stroke-width="1.1" />
<line x1="738.3" y1="393.6" x2="738.3" y2="435.9" stroke="#7c7c7c" stroke-width="1.7" />
<line x1="738.3" y1="435.4" x2="849.4" y2="435.4" stroke="#0909b6" stroke-width="1.1" />
<line x1="849.4" y1="393.6" x2="849.4" y2="435.9" stroke="#7c7c7c" stroke-width="1.7" />
<line x1="849.4" y1="394.1" x2="938.0" y2="394.1" stroke="#066806" stroke-width="1.1" />
<line x1="938.0" y1="393.6" x2="938.0" y2="435.9" stroke="#7c7c7c" stroke-width="1.7" />
<line x1="938.0" y1="435.4" x2="992.0" y2="435.4" stroke="#0909b6" stroke-width="1.1" />
<line x1="2.0" y1="440.4" x2="47.2" y2="440.4" stroke="#066806" stroke-width="1.1" />
<line x1="47.2" y1="439.9" x2="47.2" y2="482.4" stroke="#7c7c7c" stroke-width="1.7" />
<line x1="47.2" y1="481.9" x2="263.4" y2="481.9" stroke="#0909b6" stroke-width="1.1" />
<line x1="263.4" y1="439.9" x2="263.4" y2="482.4" stroke="#7c7c7c" stroke-width="1.7" />
<line x1="263.4" y1="440.4" x2="427.9" y2="440.4" stroke="#066806" stroke-width="1.1" />
<line x1="427.9" y1="439.9" x2="427.9" y2="482.4" stroke="#7c7c7c" stroke-width="1.7" />
<line x1="427.9" y1="481.9" x2="643.4" y2="481.9" stroke="#0909b6" stroke-width="1.1" />
<line x1="643.4" y1="439.9" x2="643.4" y2="482.4" stroke="#7c7c7c" stroke-width="1.7" />
<line x1="643.4" y1="440.4" x2="811.1" y2="440.4" stroke="#066806" stroke-width="1.1" />
<line x1="811.1" y1="439.9" x2="811.1" y2="482.4" stroke="#7c7c7c" stroke-width="1.7" />
<line x1="811.1" y1="481.9" x2="992.0" y2="481.9" stroke="#0909b6" stroke-width="1.1" />
<line x1="2.0" y1="528.2" x2="94.3" y2="528.2" stroke="#0909b6" stroke-width="1.1" />
<line x1="94.3" y1="486.8" x2="94.3" y2="528.7" stroke="#7c7c7c" stroke-width="1.7" />
<line x1="94.3" y1="487.3" x2="313.6" y2="487.3" stroke="#066806" stroke-width="1.1" />
<line x1="313.6" y1="486.8" x2="313.6" y2="528.7" stroke="#7c7c7c" stroke-width="1.7" />
<line x1="313.6" y1="528.2" x2="992.0" y2="528.2" stroke="#0909b6" stroke-width="1.1" />
<line x1="3.0" y1="461.0" x2="989.0" y2="461.0" stroke="#707070" stroke-width="1.1" stroke-dasharray="3 2.7"/>
<path d="M2.6 532.8V391Q2.6 389.1 4.5 389.1H11Q12.9 389.1 12.9 391V532.8Q12.9 533.4 11 533.4H4.5Q2.6 533.4 2.6 532.8Z" fill="none" stroke="#1c9fac" stroke-width="1"/>
<path d="M4.6 393.2h6M4.6 395h6M4.6 529.2h6M4.6 531h6" stroke="#777" stroke-width="0.8"/>
<path d="M13 395.7Q13 394.2 14.5 394.2H30.6L28.2 397.8V432.0L30.6 435.6H14.5Q13 435.6 13 434.1Z" fill="#181318" stroke="#9c6f9c" stroke-width="1"/>
<text x="21.2" y="416.8" font-size="5.8" fill="#a878a8" text-anchor="middle" font-weight="normal" >D7</text>
<path d="M13 441.9Q13 440.4 14.5 440.4H30.6L28.2 444.0V478.4L30.6 482.0H14.5Q13 482.0 13 480.5Z" fill="#121612" stroke="#5f735f" stroke-width="1"/>
<text x="21.2" y="463.1" font-size="5.8" fill="#7f957f" text-anchor="middle" font-weight="normal" >D5</text>
<path d="M13 488.9Q13 487.4 14.5 487.4H30.6L28.2 491.0V524.8L30.6 528.4H14.5Q13 528.4 13 526.9Z" fill="#1c120c" stroke="#b4693a" stroke-width="1"/>
<text x="21.2" y="509.8" font-size="5.8" fill="#c97a45" text-anchor="middle" font-weight="normal" >D3</text>
<text x="7.6" y="462.6" font-size="4.6" fill="#1c9fac" text-anchor="middle" font-weight="normal" >C2</text>
<text x="34.8" y="418.3" font-size="11.3" fill="#27b9c3" text-anchor="start" font-weight="normal" textLength="67.2" lengthAdjust="spacingAndGlyphs" stroke="#27b9c3" stroke-width="0.25">20 MHz Clock</text>
<text x="34.8" y="464.7" font-size="11.3" fill="#27b9c3" text-anchor="start" font-weight="normal" textLength="64.0" lengthAdjust="spacingAndGlyphs" stroke="#27b9c3" stroke-width="0.25">10 MHz Data</text>
<text x="34.8" y="511.3" font-size="11.3" fill="#27b9c3" text-anchor="start" font-weight="normal" textLength="106.8" lengthAdjust="spacingAndGlyphs" stroke="#27b9c3" stroke-width="0.25">Q Output Metastable</text>
<line x1="2.0" y1="563.2" x2="992.0" y2="563.2" stroke="#0c5a0c" stroke-width="0.6" />
<line x1="428.6" y1="152.0" x2="428.6" y2="563.4" stroke="#8e8e8e" stroke-width="1.4" />
<line x1="453.0" y1="152.0" x2="453.0" y2="563.4" stroke="#8e8e8e" stroke-width="1.4" />
<line x1="429.6" y1="402.0" x2="452.0" y2="402.0" stroke="#a31212" stroke-width="1.2" stroke-dasharray="2.6 2.4"/>
<path d="M492.2 152H503.9L498 157.2Z" fill="#f58a1f"/>
<path d="M493.1 158.4H503.1V168.4H500.2L498 172.6L495.8 168.4H493.1Z" fill="#000" stroke="#ee861e" stroke-width="1.9" stroke-linejoin="miter"/>
<text x="498.0" y="166.7" font-size="8.2" fill="#ee861e" text-anchor="middle" font-weight="bold" >T</text>
<line x1="498.3" y1="175.0" x2="498.3" y2="563.0" stroke="#808080" stroke-width="0.9" stroke-dasharray="2.8 2.2"/>
<rect x="416.2" y="360.4" width="11.6" height="10.8" rx="1.8" fill="#19b3b9"/>
<text x="422.0" y="368.8" font-size="8.4" fill="#0a3d42" text-anchor="middle" font-weight="normal" >CI</text>
<rect x="454.0" y="360.4" width="11.4" height="10.8" rx="1.8" fill="#19b3b9"/>
<text x="459.7" y="368.8" font-size="8.4" fill="#0a3d42" text-anchor="middle" font-weight="normal" >CI</text>
<circle cx="434.4" cy="365.8" r="5" fill="#2d8fe0"/>
<text x="434.4" y="368.5" font-size="7.4" fill="#eaf4ff" text-anchor="middle" font-weight="normal" >A</text>
<circle cx="446.4" cy="365.8" r="5" fill="#2d8fe0"/>
<text x="446.4" y="368.5" font-size="7.4" fill="#eaf4ff" text-anchor="middle" font-weight="normal" >B</text>
<rect x="356.3" y="374.3" width="168.4" height="14.2" rx="2" fill="#3b3b3b"/>
<text x="358.3" y="384.1" font-size="8.65" fill="#dedede" text-anchor="start" font-weight="normal" xml:space="preserve">Δt:&#160;&#160;6.26 ns 1/Δt:&#160;&#160;159.63 MHz</text>
<rect x="366" y="391.4" width="61.8" height="21.8" rx="2" fill="#3b3b3b"/>
<text x="368.2" y="400.3" font-size="8.6" fill="#dedede" text-anchor="start" font-weight="normal" >t: -17.66 ns</text>
<text x="368.2" y="409.6" font-size="8.6" fill="#dedede" text-anchor="start" font-weight="normal" >d: 0x1x 0xxx</text>
<rect x="454" y="391.4" width="60.8" height="21.8" rx="2" fill="#3b3b3b"/>
<text x="455.6" y="400.3" font-size="8.6" fill="#dedede" text-anchor="start" font-weight="normal" >t: -11.40 ns</text>
<text x="455.6" y="409.6" font-size="8.6" fill="#dedede" text-anchor="start" font-weight="normal" >d: 0x0x 0xxx</text>
<line x1="428.6" y1="372.0" x2="428.6" y2="415.0" stroke="#8e8e8e" stroke-width="1.4" />
<line x1="453.0" y1="372.0" x2="453.0" y2="415.0" stroke="#8e8e8e" stroke-width="1.4" />
</svg>
<div class="ly"><div class="abs tbar"><span style="left:7.4px">Horizontal Zoom Scale</span><div class="inp">25.00 ns/div</div><div class="zb p" style="left:150.8px"></div><div class="zb" style="left:181.8px"></div><span style="left:209px">(4.00x zoom)</span><span style="left:264.8px">Vertical Zoom</span><div class="zb p" style="left:319px"></div><div class="zb" style="left:350px"></div><span style="left:377.4px">(1.00x zoom)</span><svg style="position:absolute;left:978px;top:2.6px" width="9" height="9" viewBox="0 0 9 9"><path d="M1 1L8 8M8 1L1 8" stroke="#e8e8e8" stroke-width="1.3" fill="none"/></svg></div>
<div class="bb" style="left:1.6px;width:51.3px"><div class="h" style="background:#f7ea35;color:#3f3b00;font-size:8.4px">Ch 1</div><span style="left:4.4px;top:13.1px">500 mV/div</span><span style="left:14.4px;top:23.9px">DS</span><span style="left:4.4px;top:34.5px">500 MHz</span><svg style="position:absolute;left:4.6px;top:24.6px" width="10" height="8" viewBox="0 0 10 8"><path d="M0.8 6.6V5Q0.8 1 4.6 1Q8.6 1 8.6 5V6.6M3.2 5.4V4.4Q3.2 3 4.7 3Q6.2 3 6.2 4.4" fill="none" stroke="#3a3a3a" stroke-width="0.9"/><rect x="7.2" y="4.6" width="1.8" height="2.6" fill="#eee" stroke="#444" stroke-width="0.5"/></svg><span style="left:42px;top:33.4px;font-size:4.8px;font-weight:bold">B<span style="left:3px;top:1.8px;font-size:4.4px">w</span></span></div>
<div class="bb" style="left:55.4px;width:51.3px"><div class="h" style="background:#1f4a4e;color:#33c3d1;font-size:8.4px">Ch 2</div><span style="left:4.4px;top:13.1px">Digital</span><span style="left:11.4px;top:23.9px">: 2 V</span><svg style="position:absolute;left:3.8px;top:24.8px" width="8" height="8" viewBox="0 0 8 8"><path d="M0.4 5.6H2.8L5 2.4H7.6M1.6 7L6 1" fill="none" stroke="#3a3a3a" stroke-width="0.8"/></svg></div>
<div class="nb" style="left:421.6px"><i style="background:#e2455f"></i><b>3</b></div>
<div class="nb" style="left:447.1px"><i style="background:#96c93a"></i><b>4</b></div>
<div class="nb" style="left:472.6px"><i style="background:#ee8f2e"></i><b>5</b></div>
<div class="nb" style="left:498.2px"><i style="background:#2b2bd4"></i><b>6</b></div>
<div class="nb" style="left:523.7px"><i style="background:#d845b4"></i><b>7</b></div>
<div class="nb" style="left:549.2px"><i style="background:#1fc48f"></i><b>8</b></div>
<div class="vsep" style="left:576.8px"></div>
<div class="nb" style="left:584.0px"><i style="background:#dd8a33"></i><em>Add<br>New<br>Math</em></div>
<div class="nb" style="left:609.5px"><i style="background:#cfcfcf"></i><em>Add<br>New<br>Ref</em></div>
<div class="nb" style="left:635.1px"><i style="background:#a352e3"></i><em>Add<br>New<br>Bus</em></div>
<div class="vsep" style="left:663.4px"></div>
<div class="nb" style="left:669.2px"><i style="background:#484848"></i><u>DVM</u></div>
<div class="nb" style="left:697.4px"><i style="background:#484848"></i><u>AFG</u></div>
<div class="bb" style="left:732.4px;width:110.2px"><div class="h" style="background:#555;color:#e2e2e2">Horizontal</div><span style="left:4.2px;top:13px">100 ns/div</span><span style="left:64.2px;top:13px">1 µs</span><span style="left:4.2px;top:23.9px;letter-spacing:-0.52px">SR: 1.25 GS/s</span><span style="left:64.2px;top:23.9px">800 ps/pt</span><span style="left:4.2px;top:34.4px;letter-spacing:-0.2px">RL: 1.25 kpts</span><span style="left:74.7px;top:34.4px">50%</span><svg style="position:absolute;left:63.8px;top:36.4px" width="6" height="7" viewBox="0 0 6 7"><path d="M0.3 0.3H5.7V4L3 6.6L0.3 4Z" fill="#e8801c"/><path d="M1.7 1.6h2.6M3 1.6v2.8" stroke="#222" stroke-width="0.9"/></svg></div>
<div class="bb" style="left:848.6px;width:90px"><div class="h" style="background:#555;color:#e2e2e2">Trigger</div><div style="position:absolute;left:3.9px;top:14px;width:16.6px;height:8.6px;background:#f3e52f;border:0.7px solid #8a8410;border-radius:3.2px;box-sizing:border-box;font-size:8px;line-height:7.4px;text-align:center;">1</div><span style="left:26.2px;top:13px">Runt</span><span style="left:18.4px;top:23.9px">&lt; 25.12 ns</span><span style="left:3.8px;top:34.4px">U: 2 V&#160; L: 1 V</span><svg style="position:absolute;left:3.8px;top:24.2px" width="10" height="9" viewBox="0 0 10 9"><path d="M0.5 1.2H9.5M0.5 7.8H9.5" stroke="#5560a0" stroke-width="0.7" stroke-dasharray="1.4 1"/><path d="M0.6 7H3L4.2 3.4H5.8L7 7H9.4" fill="none" stroke="#223" stroke-width="0.9"/><path d="M2.6 2.4L7.4 6.4M7.4 2.4L2.6 6.4" stroke="#334" stroke-width="0.7"/></svg></div>
<div class="bb" style="left:944.8px;width:84.8px"><div class="h" style="background:#555;color:#e2e2e2">Acquisition</div><span style="left:4.2px;top:13px">Auto,</span><span style="left:37.6px;top:13px">Analyze</span><span style="left:4.2px;top:23.9px">High Res: 13 bits</span><span style="left:4.2px;top:34.4px">Single: 1/1</span></div>
<div class="abs stop">Stopped</div>
<div class="abs" style="left:1006.3px;top:541.1px;width:35.7px;height:21.6px;box-sizing:border-box;border:1px solid #5a5a5a;border-radius:4.5px;background:linear-gradient(#272727,#1c1c1c)"></div>
<svg class="abs" style="left:1006px;top:541px" width="80" height="24" viewBox="0 0 80 24"><path d="M11.4 4.4h8.6M11.4 4.4v8.4M20 4.4v2.4M11.4 12.6h3" stroke="#a8a8a8" stroke-width="0.9" stroke-dasharray="1.1 1.3" fill="none"/><circle cx="19.2" cy="11.4" r="3.1" fill="#5c5c5c" stroke="#b8b8b8" stroke-width="1.1"/><path d="M21.6 13.8L24.6 17" stroke="#b8b8b8" stroke-width="1.9" stroke-linecap="round"/><ellipse cx="60.7" cy="4.4" rx="7.4" ry="2.2" fill="none" stroke="#c4c4c4" stroke-width="1.1"/><path d="M53.6 5.4L55.2 18.4Q60.7 20.8 66.2 18.4L67.8 5.4" fill="none" stroke="#c4c4c4" stroke-width="1.1"/><path d="M57.6 8L58.2 18.2M60.7 8.2V18.6M63.8 8L63.2 18.2" stroke="#bdbdbd" stroke-width="1.3"/></svg>
<svg class="abs" style="left:995.4px;top:283px" width="6" height="16" viewBox="0 0 6 16"><circle cx="3" cy="3.0" r="1.05" fill="#d0d0d0"/><circle cx="3" cy="7.8" r="1.05" fill="#d0d0d0"/><circle cx="3" cy="12.6" r="1.05" fill="#d0d0d0"/></svg></div>
</body></html>
